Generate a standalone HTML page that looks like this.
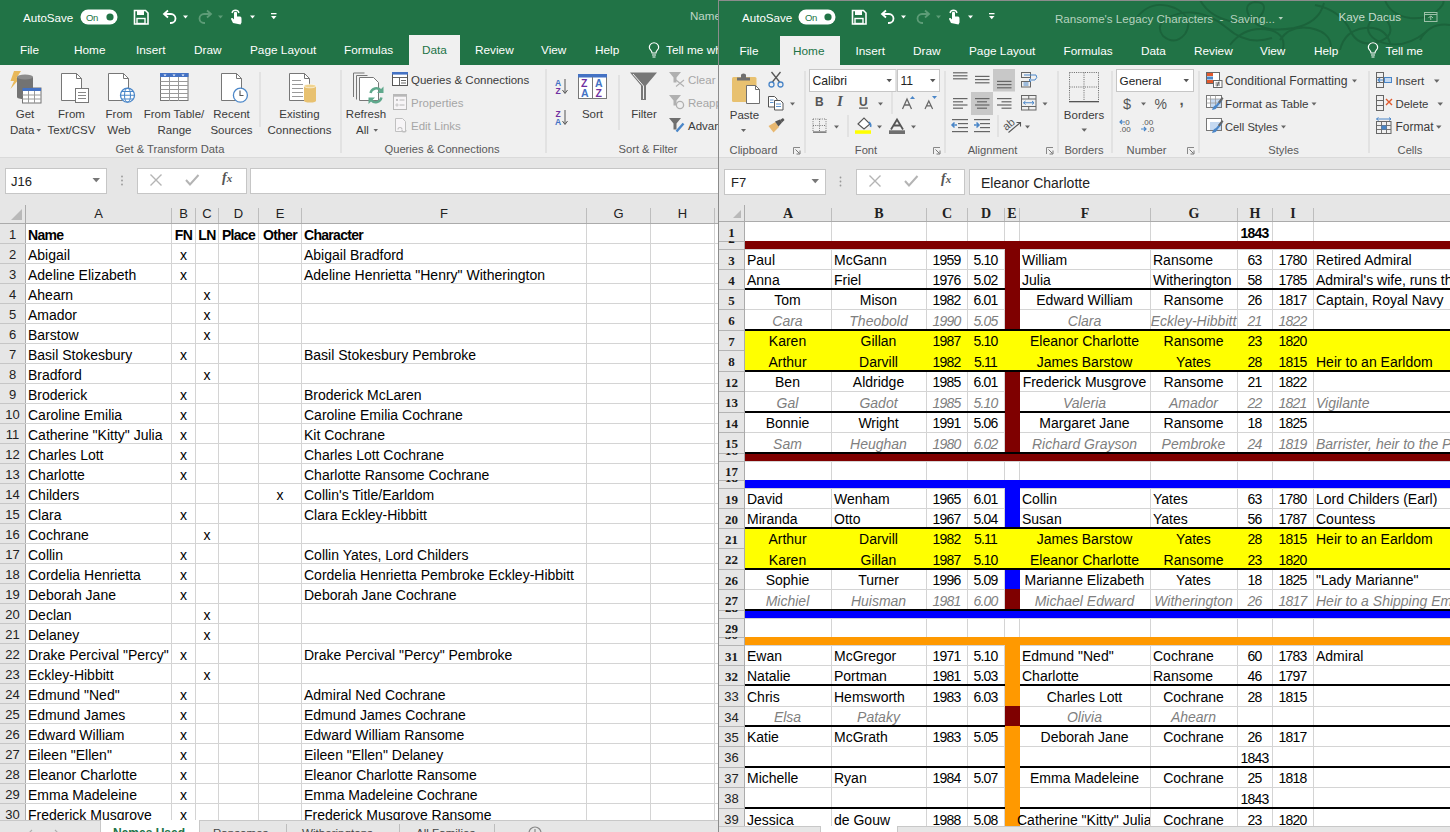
<!DOCTYPE html>
<html><head><meta charset="utf-8"><style>
*{box-sizing:border-box}
body{margin:0;width:1450px;height:832px;overflow:hidden;position:relative;font-family:"Liberation Sans",sans-serif;background:#fff}
.win{position:absolute;top:0;height:832px;overflow:hidden}
.hdr{position:absolute;background:#e6e6e6}
.ch{position:absolute;height:18px;line-height:17px;text-align:center;font-size:13px;color:#222}
.chs{position:absolute;height:16px;line-height:18px;text-align:center;font-family:"Liberation Serif",serif;font-weight:bold;font-size:14px;color:#222}
.rn{position:absolute;left:0;width:25px;height:19px;line-height:20px;text-align:center;font-size:13px;color:#222}
.rns{position:absolute;left:0;width:25px;text-align:center;font-family:"Liberation Serif",serif;font-weight:bold;font-size:13px;color:#1a1a1a}
.c{position:absolute;white-space:nowrap;font-size:14px;line-height:20px;height:19px;color:#000}
.cc{text-align:center;display:flex;justify-content:center}
.ab{position:absolute}
.t{position:absolute;white-space:nowrap;font-size:12px;color:#fff}
.rl{position:absolute;white-space:nowrap;font-size:12px;color:#444}
.gl{position:absolute;white-space:nowrap;font-size:11.5px;color:#595959}
</style></head>
<body>
<div class="win" id="L" style="left:0;width:718px">
<div class="ab" style="left:0;top:0;width:718px;height:65px;background:#217346"></div>
<div class="ab" style="left:0;top:65px;width:718px;height:93px;background:#f0f0f0"></div>
<div class="ab" style="left:0;top:157px;width:718px;height:1px;background:#dadada"></div>
<div class="ab" style="left:0;top:158px;width:718px;height:47px;background:#e6e6e6"></div>
<div class="ab" style="left:23px;top:11.2px;font-size:11.6px;line-height:14px;color:#fff;white-space:nowrap;">AutoSave</div>
<div class="ab" style="left:690px;top:9.0px;font-size:11.6px;line-height:14px;color:#bfd6c6;white-space:nowrap;">Names Used</div>
<div class="ab" style="left:20px;top:43.1px;font-size:11.8px;line-height:14px;color:#fff;white-space:nowrap;">File</div>
<div class="ab" style="left:74px;top:43.1px;font-size:11.8px;line-height:14px;color:#fff;white-space:nowrap;">Home</div>
<div class="ab" style="left:136px;top:43.1px;font-size:11.8px;line-height:14px;color:#fff;white-space:nowrap;">Insert</div>
<div class="ab" style="left:194px;top:43.1px;font-size:11.8px;line-height:14px;color:#fff;white-space:nowrap;">Draw</div>
<div class="ab" style="left:250px;top:43.1px;font-size:11.8px;line-height:14px;color:#fff;white-space:nowrap;">Page Layout</div>
<div class="ab" style="left:344px;top:43.1px;font-size:11.8px;line-height:14px;color:#fff;white-space:nowrap;">Formulas</div>
<div class="ab" style="left:475px;top:43.1px;font-size:11.8px;line-height:14px;color:#fff;white-space:nowrap;">Review</div>
<div class="ab" style="left:541px;top:43.1px;font-size:11.8px;line-height:14px;color:#fff;white-space:nowrap;">View</div>
<div class="ab" style="left:595px;top:43.1px;font-size:11.8px;line-height:14px;color:#fff;white-space:nowrap;">Help</div>
<div class="ab" style="left:666px;top:43.1px;font-size:11.8px;line-height:14px;color:#fff;white-space:nowrap;">Tell me what you want to do</div>
<div class="ab" style="left:409px;top:35px;width:51px;height:30px;background:#f0f0f0"></div>
<div class="ab" style="left:422px;top:43.1px;font-size:11.8px;line-height:14px;color:#217346;white-space:nowrap;">Data</div>
<svg class="ab" style="left:0;top:0" width="718" height="160"><rect x="80.5" y="9.5" width="37" height="15" rx="7.5" fill="#fff"/><circle cx="110" cy="17" r="3.6" fill="#217346"/><path d="M134.5 10.5 h11 l2.5 2.5 v11 h-13.5 z" fill="none" stroke="#fff" stroke-width="1.6"/><rect x="137" y="11" width="7" height="4" fill="#fff"/><rect x="137" y="18.5" width="8" height="5" fill="none" stroke="#fff" stroke-width="1.4"/><path d="M165 14 h6 a4.5 4.5 0 0 1 0 9 h-1" fill="none" stroke="#fff" stroke-width="1.8"/><path d="M168 10.5 l-4 3.5 l4 3.5" fill="none" stroke="#fff" stroke-width="1.8"/><polygon points="183,15.5 188,15.5 185.5,18.5" fill="#fff"/><path d="M210 14 h-6 a4.5 4.5 0 0 0 0 9 h1" fill="none" stroke="#5d9c77" stroke-width="1.8"/><path d="M207 10.5 l4 3.5 l-4 3.5" fill="none" stroke="#5d9c77" stroke-width="1.8"/><polygon points="218,15.5 223,15.5 220.5,18.5" fill="#5d9c77"/><path d="M233 23 l-2 -4 q0 -1.5 1.5 -1 l1.5 1.5 v-7 q1.5 -1.5 3 0 v4 h3 q1.5 0 1.5 2 v4 l-1 2 z" fill="#fff"/><path d="M232 13 a3.6 3.6 0 0 1 7 0" fill="none" stroke="#fff" stroke-width="1.3"/><polygon points="250,15.5 255,15.5 252.5,18.5" fill="#fff"/><rect x="271" y="13" width="5.5" height="1.3" fill="#fff"/><polygon points="271,16 276.5,16 273.75,19.25" fill="#fff"/><path d="M652 53 q0 -1.5 -1.3 -2.8 q-2.2 -2.2 -0.9 -5 q1.3 -2.4 4.2 -2.4 q2.9 0 4.2 2.4 q1.3 2.8 -0.9 5 q-1.3 1.3 -1.3 2.8 z" fill="none" stroke="#fff" stroke-width="1.1"/><path d="M652 55 h4 M652.5 57 h3" stroke="#fff" stroke-width="1.1"/><rect x="259.5" y="72" width="1" height="55" fill="#d4d4d4"/><rect x="340.5" y="70" width="1" height="83" fill="#d4d4d4"/><rect x="545.5" y="69" width="1" height="84" fill="#d4d4d4"/><rect x="618.5" y="75" width="1" height="55" fill="#d4d4d4"/><path d="M14 71 h7 l-4.5 7 h3.5 l-9.5 11 l3.5 -8 h-3.5 z" fill="#e8b85a"/><path d="M17 77 v20 q0 2 8 2 q8 0 8 -2 v-20 z" fill="#737373"/><ellipse cx="25" cy="77" rx="8" ry="2.5" fill="#8c8c8c"/><rect x="22.5" y="88" width="18.5" height="15" fill="#fff" stroke="#737373" stroke-width="1"/><rect x="22.5" y="88" width="18.5" height="3" fill="#4472c4"/><path d="M22.5 95 h18.5 M22.5 99 h18.5 M28.5 91 v12 M34.5 91 v12" stroke="#9a9a9a" stroke-width="1"/><polygon points="36.5,129 41.0,129 38.75,131.75" fill="#666"/><path d="M61.5 73.5 h15 l5 5 v22 h-20 z" fill="#fff" stroke="#777" stroke-width="1"/><path d="M76.5 73.5 v5 h5" fill="none" stroke="#777"/><rect x="75.5" y="88.5" width="13" height="14" fill="#fff" stroke="#777"/><path d="M78 92.5 h8 M78 95.5 h8 M78 98.5 h8" stroke="#888" stroke-width="1"/><path d="M108.5 73.5 h15 l5 5 v22 h-20 z" fill="#fff" stroke="#777" stroke-width="1"/><path d="M123.5 73.5 v5 h5" fill="none" stroke="#777"/><circle cx="127.5" cy="95.2" r="7" fill="#fff" stroke="#4a86c8" stroke-width="1.3"/><ellipse cx="127.5" cy="95.2" rx="3" ry="7" fill="none" stroke="#4a86c8" stroke-width="1.1"/><path d="M120.5 95.2 h14 M121.5 91.5 h12 M121.5 99 h12" stroke="#4a86c8" stroke-width="1.1"/><rect x="160.5" y="73.5" width="27.5" height="27" fill="#fff" stroke="#777"/><rect x="160" y="73" width="28.5" height="4" fill="#4472c4"/><path d="M160.5 81.5 h27.5 M160.5 85.5 h27.5 M160.5 89.5 h27.5 M160.5 93.5 h27.5 M160.5 97.5 h27.5 M169.5 77 v24 M178.5 77 v24" stroke="#9a9a9a" stroke-width="1"/><path d="M163.5 74.5 h3 l-1.5 1.7z M172.5 74.5 h3 l-1.5 1.7z M181.5 74.5 h3 l-1.5 1.7z" fill="#fff"/><path d="M221.5 73.5 h15 l5 5 v22 h-20 z" fill="#fff" stroke="#777" stroke-width="1"/><path d="M236.5 73.5 v5 h5" fill="none" stroke="#777"/><circle cx="240.4" cy="95.2" r="7" fill="#fff" stroke="#4a86c8" stroke-width="1.3"/><path d="M240 90.5 v5 h3.5" fill="none" stroke="#555" stroke-width="1.1"/><path d="M289.5 73.5 h15 l5 5 v22 h-20 z" fill="#fff" stroke="#777" stroke-width="1"/><path d="M304.5 73.5 v5 h5" fill="none" stroke="#777"/><path d="M292 80.5 h9 M292 84.5 h11 M292 88.5 h11 M292 92.5 h11 M292 96.5 h11" stroke="#999" stroke-width="1"/><path d="M304 86 v14.5 q0 2 6 2 q6 0 6 -2 v-14.5 z" fill="#e8c170"/><ellipse cx="310" cy="86" rx="6" ry="1.8" fill="#f0d38f" stroke="#fff" stroke-width="0.6"/><path d="M353.5 73 v24 M353.5 73 h11" stroke="#777" fill="none"/><path d="M356.5 75.5 v24 M356.5 75.5 h11" stroke="#777" fill="none"/><path d="M359.5 77.5 h14 l5 5 v18 h-19 z" fill="#fff" stroke="#777"/><path d="M370.5 93 a6 6 0 0 1 10.5 -2.5" fill="none" stroke="#5fa88c" stroke-width="2.4"/><path d="M381.5 97.5 a6 6 0 0 1 -10.5 2.5" fill="none" stroke="#5fa88c" stroke-width="2.4"/><path d="M383.5 86.5 v6.5 h-6.5 z M368.5 104 v-6.5 h6.5 z" fill="#5fa88c"/><polygon points="373.5,129 378.0,129 375.75,131.75" fill="#666"/><rect x="392.5" y="72.5" width="15" height="13" fill="#fff" stroke="#555"/><rect x="392" y="72" width="16" height="2.6" fill="#4472c4"/><path d="M392.5 77.5 h15 M399.5 77.5 v8 M401 80.5 h5 M401 83 h5" stroke="#555" stroke-width="0.9"/><rect x="393.5" y="94.5" width="13" height="15" fill="#f7f5f7" stroke="#b8b8b8"/><rect x="393.5" y="94.5" width="13" height="2.2" fill="#b8b8b8"/><circle cx="397" cy="100" r="1.1" fill="#b8b8b8"/><circle cx="397" cy="105" r="1.1" fill="none" stroke="#b8b8b8" stroke-width="0.8"/><path d="M399.5 100 h5 M399.5 105 h5" stroke="#b8b8b8"/><path d="M395.5 118.5 h7 l3 3 v10 h-10 z" fill="#f7f5f7" stroke="#c0c0c0"/><path d="M398 129.5 a2 2 0 0 1 4 0 M402 130 a2 2 0 0 0 4 0" stroke="#c0c0c0" fill="none" stroke-width="1.2"/><text x="555" y="85.8" font-family="Liberation Sans" font-size="8.5" font-weight="bold" fill="#4472c4">A</text><text x="555.5" y="94" font-family="Liberation Sans" font-size="8.5" font-weight="bold" fill="#7030a0">Z</text><path d="M565 79 v14 M562.5 90 l2.5 3.5 l2.5 -3.5" stroke="#555" fill="none" stroke-width="1"/><text x="555.5" y="117" font-family="Liberation Sans" font-size="8.5" font-weight="bold" fill="#7030a0">Z</text><text x="555" y="125.3" font-family="Liberation Sans" font-size="8.5" font-weight="bold" fill="#4472c4">A</text><path d="M565 110 v14 M562.5 121 l2.5 3.5 l2.5 -3.5" stroke="#555" fill="none" stroke-width="1"/><rect x="578.5" y="74.5" width="28" height="24" fill="#fff" stroke="#777"/><rect x="578" y="74" width="29" height="3.5" fill="#4472c4"/><path d="M592.5 77 v21" stroke="#777"/><g font-family="Liberation Sans" font-size="10.5" font-weight="bold"><text x="581" y="86.5" fill="#7030a0">Z</text><text x="581" y="97" fill="#4472c4">A</text><text x="595" y="86.5" fill="#4472c4">A</text><text x="595.5" y="97" fill="#7030a0">Z</text></g><path d="M630 72.5 h27 l-11 13 v14.5 h-5 v-14.5 z" fill="#777"/><path d="M633 74 l10.5 12 v13" stroke="#fff" stroke-width="0.9" fill="none"/><path d="M669 72 h12 l-4.5 5.5 v5 h-3 v-5 z" fill="#b0b0b0"/><path d="M676 80 l8 6.5 M684 80 l-8 6.5" stroke="#b0b0b0" stroke-width="1.1"/><path d="M669 95 h12 l-4.5 5.5 v5 h-3 v-5 z" fill="#b0b0b0"/><circle cx="680" cy="105" r="3.6" fill="none" stroke="#b0b0b0" stroke-width="1.3"/><path d="M669 118 h12 l-4.5 5.5 v6 h-3 v-6 z" fill="#6f6f6f"/><path d="M676.5 131.5 l7 -8" stroke="#4a86c8" stroke-width="2.4"/></svg>
<div class="ab" style="left:-35.0px;width:120px;text-align:center;top:106.9px;font-size:11.5px;line-height:14px;color:#3b3b3b;white-space:nowrap">Get</div>
<div class="ab" style="left:10px;top:122.8px;font-size:11.5px;line-height:14px;color:#3b3b3b;white-space:nowrap;">Data</div>
<div class="ab" style="left:11.5px;width:120px;text-align:center;top:106.9px;font-size:11.5px;line-height:14px;color:#3b3b3b;white-space:nowrap">From</div>
<div class="ab" style="left:11.5px;width:120px;text-align:center;top:122.8px;font-size:11.5px;line-height:14px;color:#3b3b3b;white-space:nowrap">Text/CSV</div>
<div class="ab" style="left:59.0px;width:120px;text-align:center;top:106.9px;font-size:11.5px;line-height:14px;color:#3b3b3b;white-space:nowrap">From</div>
<div class="ab" style="left:59.0px;width:120px;text-align:center;top:122.8px;font-size:11.5px;line-height:14px;color:#3b3b3b;white-space:nowrap">Web</div>
<div class="ab" style="left:114.0px;width:120px;text-align:center;top:106.9px;font-size:11.5px;line-height:14px;color:#3b3b3b;white-space:nowrap">From Table/</div>
<div class="ab" style="left:114.5px;width:120px;text-align:center;top:122.8px;font-size:11.5px;line-height:14px;color:#3b3b3b;white-space:nowrap">Range</div>
<div class="ab" style="left:171.5px;width:120px;text-align:center;top:106.9px;font-size:11.5px;line-height:14px;color:#3b3b3b;white-space:nowrap">Recent</div>
<div class="ab" style="left:171.5px;width:120px;text-align:center;top:122.8px;font-size:11.5px;line-height:14px;color:#3b3b3b;white-space:nowrap">Sources</div>
<div class="ab" style="left:239.5px;width:120px;text-align:center;top:106.9px;font-size:11.5px;line-height:14px;color:#3b3b3b;white-space:nowrap">Existing</div>
<div class="ab" style="left:239.5px;width:120px;text-align:center;top:122.8px;font-size:11.5px;line-height:14px;color:#3b3b3b;white-space:nowrap">Connections</div>
<div class="ab" style="left:306.0px;width:120px;text-align:center;top:106.9px;font-size:11.5px;line-height:14px;color:#3b3b3b;white-space:nowrap">Refresh</div>
<div class="ab" style="left:356px;top:122.8px;font-size:11.5px;line-height:14px;color:#3b3b3b;white-space:nowrap;">All</div>
<div class="ab" style="left:411px;top:73.2px;font-size:11.5px;line-height:14px;color:#3b3b3b;white-space:nowrap;">Queries &amp; Connections</div>
<div class="ab" style="left:411px;top:95.8px;font-size:11.5px;line-height:14px;color:#a6a6a6;white-space:nowrap;">Properties</div>
<div class="ab" style="left:411px;top:118.8px;font-size:11.5px;line-height:14px;color:#a6a6a6;white-space:nowrap;">Edit Links</div>
<div class="ab" style="left:532.5px;width:120px;text-align:center;top:106.9px;font-size:11.5px;line-height:14px;color:#3b3b3b;white-space:nowrap">Sort</div>
<div class="ab" style="left:584.0px;width:120px;text-align:center;top:106.9px;font-size:11.5px;line-height:14px;color:#3b3b3b;white-space:nowrap">Filter</div>
<div class="ab" style="left:688px;top:72.8px;font-size:11.5px;line-height:14px;color:#a6a6a6;white-space:nowrap;">Clear</div>
<div class="ab" style="left:688px;top:95.7px;font-size:11.5px;line-height:14px;color:#a6a6a6;white-space:nowrap;">Reapply</div>
<div class="ab" style="left:688px;top:118.7px;font-size:11.5px;line-height:14px;color:#3b3b3b;white-space:nowrap;">Advanced</div>
<div class="ab" style="left:90.0px;width:160px;text-align:center;top:142.0px;font-size:11.2px;line-height:14px;color:#595959;white-space:nowrap">Get &amp; Transform Data</div>
<div class="ab" style="left:362.0px;width:160px;text-align:center;top:142.0px;font-size:11.2px;line-height:14px;color:#595959;white-space:nowrap">Queries &amp; Connections</div>
<div class="ab" style="left:588.0px;width:120px;text-align:center;top:142.0px;font-size:11.2px;line-height:14px;color:#595959;white-space:nowrap">Sort &amp; Filter</div>
<div class="ab" style="left:86px;top:11.4px;font-size:9.5px;line-height:14px;color:#217346;white-space:nowrap;letter-spacing:-0.3px">On</div>
<div class="ab" style="left:5px;top:168px;width:102px;height:26px;background:#fff;border:1px solid #c6c6c6"></div>
<div class="ab" style="left:11px;top:174.7px;font-size:13px;line-height:14px;color:#222;white-space:nowrap;">J16</div>
<div class="ab" style="left:137px;top:168px;width:110px;height:26px;background:#fff;border:1px solid #c6c6c6"></div>
<div class="ab" style="left:250px;top:168px;width:480px;height:26px;background:#fff;border:1px solid #c6c6c6"></div>
<div class="ab" style="left:222px;top:170px;font-family:'Liberation Serif';font-style:italic;font-weight:bold;font-size:14px;color:#555">f<span style="font-size:11px">x</span></div>
<svg class="ab" style="left:0;top:160px" width="718" height="45"><g transform="translate(0,-160)"><polygon points="92.5,178 100.0,178 96.25,182.25" fill="#777"/><circle cx="122" cy="176.5" r="0.9" fill="#999"/><circle cx="122" cy="180.5" r="0.9" fill="#999"/><circle cx="122" cy="184.5" r="0.9" fill="#999"/><path d="M150.5 174.5 l11 11 M161.5 174.5 l-11 11" stroke="#b4b4b4" stroke-width="1.4"/><path d="M186 180 l4 4.5 l8.5 -9.5" stroke="#b4b4b4" stroke-width="2" fill="none"/></g></svg>
<div style="position:absolute;left:0;top:205px;width:718px;height:627px;background:#fff"></div>
<div class="hdr" style="left:0;top:205px;width:718px;height:18px"></div>
<div class="hdr" style="left:0;top:223px;width:25px;height:609px"></div>
<svg style="position:absolute;left:0;top:205px" width="25" height="18"><polygon points="22,4 22,15 11,15" fill="#b9b9b9"/></svg>
<div style="position:absolute;left:171px;top:223px;width:1px;height:609px;background:#d4d4d4"></div>
<div style="position:absolute;left:171px;top:208px;width:1px;height:15px;background:#bdbdbd"></div>
<div class="ch" style="left:26px;top:205px;width:145px">A</div>
<div style="position:absolute;left:195px;top:223px;width:1px;height:609px;background:#d4d4d4"></div>
<div style="position:absolute;left:195px;top:208px;width:1px;height:15px;background:#bdbdbd"></div>
<div class="ch" style="left:172px;top:205px;width:23px">B</div>
<div style="position:absolute;left:218px;top:223px;width:1px;height:609px;background:#d4d4d4"></div>
<div style="position:absolute;left:218px;top:208px;width:1px;height:15px;background:#bdbdbd"></div>
<div class="ch" style="left:196px;top:205px;width:22px">C</div>
<div style="position:absolute;left:258px;top:223px;width:1px;height:609px;background:#d4d4d4"></div>
<div style="position:absolute;left:258px;top:208px;width:1px;height:15px;background:#bdbdbd"></div>
<div class="ch" style="left:219px;top:205px;width:39px">D</div>
<div style="position:absolute;left:301px;top:223px;width:1px;height:609px;background:#d4d4d4"></div>
<div style="position:absolute;left:301px;top:208px;width:1px;height:15px;background:#bdbdbd"></div>
<div class="ch" style="left:259px;top:205px;width:42px">E</div>
<div style="position:absolute;left:586px;top:223px;width:1px;height:609px;background:#d4d4d4"></div>
<div style="position:absolute;left:586px;top:208px;width:1px;height:15px;background:#bdbdbd"></div>
<div class="ch" style="left:302px;top:205px;width:284px">F</div>
<div style="position:absolute;left:650px;top:223px;width:1px;height:609px;background:#d4d4d4"></div>
<div style="position:absolute;left:650px;top:208px;width:1px;height:15px;background:#bdbdbd"></div>
<div class="ch" style="left:587px;top:205px;width:63px">G</div>
<div style="position:absolute;left:714px;top:223px;width:1px;height:609px;background:#d4d4d4"></div>
<div style="position:absolute;left:714px;top:208px;width:1px;height:15px;background:#bdbdbd"></div>
<div class="ch" style="left:651px;top:205px;width:63px">H</div>
<div style="position:absolute;left:800px;top:223px;width:1px;height:609px;background:#d4d4d4"></div>
<div style="position:absolute;left:800px;top:208px;width:1px;height:15px;background:#bdbdbd"></div>
<div style="position:absolute;left:0;top:223px;width:718px;height:1px;background:#ababab"></div>
<div style="position:absolute;left:25px;top:205px;width:1px;height:627px;background:#ababab"></div>
<div style="position:absolute;left:0;top:243px;width:718px;height:1px;background:#d4d4d4"></div>
<div style="position:absolute;left:0;top:243px;width:25px;height:1px;background:#c6c6c6"></div>
<div class="rn" style="top:225px">1</div>
<div class="c" style="left:28px;top:225px; font-weight:bold;letter-spacing:-0.7px;">Name</div>
<div class="c cc" style="left:172px;width:23px;top:225px; font-weight:bold;letter-spacing:-0.7px;">FN</div>
<div class="c cc" style="left:196px;width:22px;top:225px; font-weight:bold;letter-spacing:-0.7px;">LN</div>
<div class="c cc" style="left:219px;width:39px;top:225px; font-weight:bold;letter-spacing:-0.7px;">Place</div>
<div class="c cc" style="left:259px;width:42px;top:225px; font-weight:bold;letter-spacing:-0.7px;">Other</div>
<div class="c" style="left:304px;top:225px; font-weight:bold;letter-spacing:-0.7px;">Character</div>
<div style="position:absolute;left:0;top:263px;width:718px;height:1px;background:#d4d4d4"></div>
<div style="position:absolute;left:0;top:263px;width:25px;height:1px;background:#c6c6c6"></div>
<div class="rn" style="top:245px">2</div>
<div class="c" style="left:28px;top:245px;">Abigail</div>
<div class="c cc" style="left:172px;width:23px;top:245px">x</div>
<div class="c" style="left:304px;top:245px;">Abigail Bradford</div>
<div style="position:absolute;left:0;top:283px;width:718px;height:1px;background:#d4d4d4"></div>
<div style="position:absolute;left:0;top:283px;width:25px;height:1px;background:#c6c6c6"></div>
<div class="rn" style="top:265px">3</div>
<div class="c" style="left:28px;top:265px;">Adeline Elizabeth</div>
<div class="c cc" style="left:172px;width:23px;top:265px">x</div>
<div class="c" style="left:304px;top:265px;">Adeline Henrietta "Henry" Witherington</div>
<div style="position:absolute;left:0;top:303px;width:718px;height:1px;background:#d4d4d4"></div>
<div style="position:absolute;left:0;top:303px;width:25px;height:1px;background:#c6c6c6"></div>
<div class="rn" style="top:285px">4</div>
<div class="c" style="left:28px;top:285px;">Ahearn</div>
<div class="c cc" style="left:196px;width:22px;top:285px">x</div>
<div style="position:absolute;left:0;top:323px;width:718px;height:1px;background:#d4d4d4"></div>
<div style="position:absolute;left:0;top:323px;width:25px;height:1px;background:#c6c6c6"></div>
<div class="rn" style="top:305px">5</div>
<div class="c" style="left:28px;top:305px;">Amador</div>
<div class="c cc" style="left:196px;width:22px;top:305px">x</div>
<div style="position:absolute;left:0;top:343px;width:718px;height:1px;background:#d4d4d4"></div>
<div style="position:absolute;left:0;top:343px;width:25px;height:1px;background:#c6c6c6"></div>
<div class="rn" style="top:325px">6</div>
<div class="c" style="left:28px;top:325px;">Barstow</div>
<div class="c cc" style="left:196px;width:22px;top:325px">x</div>
<div style="position:absolute;left:0;top:363px;width:718px;height:1px;background:#d4d4d4"></div>
<div style="position:absolute;left:0;top:363px;width:25px;height:1px;background:#c6c6c6"></div>
<div class="rn" style="top:345px">7</div>
<div class="c" style="left:28px;top:345px;">Basil Stokesbury</div>
<div class="c cc" style="left:172px;width:23px;top:345px">x</div>
<div class="c" style="left:304px;top:345px;">Basil Stokesbury Pembroke</div>
<div style="position:absolute;left:0;top:383px;width:718px;height:1px;background:#d4d4d4"></div>
<div style="position:absolute;left:0;top:383px;width:25px;height:1px;background:#c6c6c6"></div>
<div class="rn" style="top:365px">8</div>
<div class="c" style="left:28px;top:365px;">Bradford</div>
<div class="c cc" style="left:196px;width:22px;top:365px">x</div>
<div style="position:absolute;left:0;top:403px;width:718px;height:1px;background:#d4d4d4"></div>
<div style="position:absolute;left:0;top:403px;width:25px;height:1px;background:#c6c6c6"></div>
<div class="rn" style="top:385px">9</div>
<div class="c" style="left:28px;top:385px;">Broderick</div>
<div class="c cc" style="left:172px;width:23px;top:385px">x</div>
<div class="c" style="left:304px;top:385px;">Broderick McLaren</div>
<div style="position:absolute;left:0;top:423px;width:718px;height:1px;background:#d4d4d4"></div>
<div style="position:absolute;left:0;top:423px;width:25px;height:1px;background:#c6c6c6"></div>
<div class="rn" style="top:405px">10</div>
<div class="c" style="left:28px;top:405px;">Caroline Emilia</div>
<div class="c cc" style="left:172px;width:23px;top:405px">x</div>
<div class="c" style="left:304px;top:405px;">Caroline Emilia Cochrane</div>
<div style="position:absolute;left:0;top:443px;width:718px;height:1px;background:#d4d4d4"></div>
<div style="position:absolute;left:0;top:443px;width:25px;height:1px;background:#c6c6c6"></div>
<div class="rn" style="top:425px">11</div>
<div class="c" style="left:28px;top:425px;">Catherine "Kitty" Julia</div>
<div class="c cc" style="left:172px;width:23px;top:425px">x</div>
<div class="c" style="left:304px;top:425px;">Kit Cochrane</div>
<div style="position:absolute;left:0;top:463px;width:718px;height:1px;background:#d4d4d4"></div>
<div style="position:absolute;left:0;top:463px;width:25px;height:1px;background:#c6c6c6"></div>
<div class="rn" style="top:445px">12</div>
<div class="c" style="left:28px;top:445px;">Charles Lott</div>
<div class="c cc" style="left:172px;width:23px;top:445px">x</div>
<div class="c" style="left:304px;top:445px;">Charles Lott Cochrane</div>
<div style="position:absolute;left:0;top:483px;width:718px;height:1px;background:#d4d4d4"></div>
<div style="position:absolute;left:0;top:483px;width:25px;height:1px;background:#c6c6c6"></div>
<div class="rn" style="top:465px">13</div>
<div class="c" style="left:28px;top:465px;">Charlotte</div>
<div class="c cc" style="left:172px;width:23px;top:465px">x</div>
<div class="c" style="left:304px;top:465px;">Charlotte Ransome Cochrane</div>
<div style="position:absolute;left:0;top:503px;width:718px;height:1px;background:#d4d4d4"></div>
<div style="position:absolute;left:0;top:503px;width:25px;height:1px;background:#c6c6c6"></div>
<div class="rn" style="top:485px">14</div>
<div class="c" style="left:28px;top:485px;">Childers</div>
<div class="c cc" style="left:259px;width:42px;top:485px">x</div>
<div class="c" style="left:304px;top:485px;">Collin's Title/Earldom</div>
<div style="position:absolute;left:0;top:523px;width:718px;height:1px;background:#d4d4d4"></div>
<div style="position:absolute;left:0;top:523px;width:25px;height:1px;background:#c6c6c6"></div>
<div class="rn" style="top:505px">15</div>
<div class="c" style="left:28px;top:505px;">Clara</div>
<div class="c cc" style="left:172px;width:23px;top:505px">x</div>
<div class="c" style="left:304px;top:505px;">Clara Eckley-Hibbitt</div>
<div style="position:absolute;left:0;top:543px;width:718px;height:1px;background:#d4d4d4"></div>
<div style="position:absolute;left:0;top:543px;width:25px;height:1px;background:#c6c6c6"></div>
<div class="rn" style="top:525px">16</div>
<div class="c" style="left:28px;top:525px;">Cochrane</div>
<div class="c cc" style="left:196px;width:22px;top:525px">x</div>
<div style="position:absolute;left:0;top:563px;width:718px;height:1px;background:#d4d4d4"></div>
<div style="position:absolute;left:0;top:563px;width:25px;height:1px;background:#c6c6c6"></div>
<div class="rn" style="top:545px">17</div>
<div class="c" style="left:28px;top:545px;">Collin</div>
<div class="c cc" style="left:172px;width:23px;top:545px">x</div>
<div class="c" style="left:304px;top:545px;">Collin Yates, Lord Childers</div>
<div style="position:absolute;left:0;top:583px;width:718px;height:1px;background:#d4d4d4"></div>
<div style="position:absolute;left:0;top:583px;width:25px;height:1px;background:#c6c6c6"></div>
<div class="rn" style="top:565px">18</div>
<div class="c" style="left:28px;top:565px;">Cordelia Henrietta</div>
<div class="c cc" style="left:172px;width:23px;top:565px">x</div>
<div class="c" style="left:304px;top:565px;">Cordelia Henrietta Pembroke Eckley-Hibbitt</div>
<div style="position:absolute;left:0;top:603px;width:718px;height:1px;background:#d4d4d4"></div>
<div style="position:absolute;left:0;top:603px;width:25px;height:1px;background:#c6c6c6"></div>
<div class="rn" style="top:585px">19</div>
<div class="c" style="left:28px;top:585px;">Deborah Jane</div>
<div class="c cc" style="left:172px;width:23px;top:585px">x</div>
<div class="c" style="left:304px;top:585px;">Deborah Jane Cochrane</div>
<div style="position:absolute;left:0;top:623px;width:718px;height:1px;background:#d4d4d4"></div>
<div style="position:absolute;left:0;top:623px;width:25px;height:1px;background:#c6c6c6"></div>
<div class="rn" style="top:605px">20</div>
<div class="c" style="left:28px;top:605px;">Declan</div>
<div class="c cc" style="left:196px;width:22px;top:605px">x</div>
<div style="position:absolute;left:0;top:643px;width:718px;height:1px;background:#d4d4d4"></div>
<div style="position:absolute;left:0;top:643px;width:25px;height:1px;background:#c6c6c6"></div>
<div class="rn" style="top:625px">21</div>
<div class="c" style="left:28px;top:625px;">Delaney</div>
<div class="c cc" style="left:196px;width:22px;top:625px">x</div>
<div style="position:absolute;left:0;top:663px;width:718px;height:1px;background:#d4d4d4"></div>
<div style="position:absolute;left:0;top:663px;width:25px;height:1px;background:#c6c6c6"></div>
<div class="rn" style="top:645px">22</div>
<div class="c" style="left:28px;top:645px;">Drake Percival "Percy"</div>
<div class="c cc" style="left:172px;width:23px;top:645px">x</div>
<div class="c" style="left:304px;top:645px;">Drake Percival "Percy" Pembroke</div>
<div style="position:absolute;left:0;top:683px;width:718px;height:1px;background:#d4d4d4"></div>
<div style="position:absolute;left:0;top:683px;width:25px;height:1px;background:#c6c6c6"></div>
<div class="rn" style="top:665px">23</div>
<div class="c" style="left:28px;top:665px;">Eckley-Hibbitt</div>
<div class="c cc" style="left:196px;width:22px;top:665px">x</div>
<div style="position:absolute;left:0;top:703px;width:718px;height:1px;background:#d4d4d4"></div>
<div style="position:absolute;left:0;top:703px;width:25px;height:1px;background:#c6c6c6"></div>
<div class="rn" style="top:685px">24</div>
<div class="c" style="left:28px;top:685px;">Edmund "Ned"</div>
<div class="c cc" style="left:172px;width:23px;top:685px">x</div>
<div class="c" style="left:304px;top:685px;">Admiral Ned Cochrane</div>
<div style="position:absolute;left:0;top:723px;width:718px;height:1px;background:#d4d4d4"></div>
<div style="position:absolute;left:0;top:723px;width:25px;height:1px;background:#c6c6c6"></div>
<div class="rn" style="top:705px">25</div>
<div class="c" style="left:28px;top:705px;">Edmund James</div>
<div class="c cc" style="left:172px;width:23px;top:705px">x</div>
<div class="c" style="left:304px;top:705px;">Edmund James Cochrane</div>
<div style="position:absolute;left:0;top:743px;width:718px;height:1px;background:#d4d4d4"></div>
<div style="position:absolute;left:0;top:743px;width:25px;height:1px;background:#c6c6c6"></div>
<div class="rn" style="top:725px">26</div>
<div class="c" style="left:28px;top:725px;">Edward William</div>
<div class="c cc" style="left:172px;width:23px;top:725px">x</div>
<div class="c" style="left:304px;top:725px;">Edward William Ransome</div>
<div style="position:absolute;left:0;top:763px;width:718px;height:1px;background:#d4d4d4"></div>
<div style="position:absolute;left:0;top:763px;width:25px;height:1px;background:#c6c6c6"></div>
<div class="rn" style="top:745px">27</div>
<div class="c" style="left:28px;top:745px;">Eileen "Ellen"</div>
<div class="c cc" style="left:172px;width:23px;top:745px">x</div>
<div class="c" style="left:304px;top:745px;">Eileen "Ellen" Delaney</div>
<div style="position:absolute;left:0;top:783px;width:718px;height:1px;background:#d4d4d4"></div>
<div style="position:absolute;left:0;top:783px;width:25px;height:1px;background:#c6c6c6"></div>
<div class="rn" style="top:765px">28</div>
<div class="c" style="left:28px;top:765px;">Eleanor Charlotte</div>
<div class="c cc" style="left:172px;width:23px;top:765px">x</div>
<div class="c" style="left:304px;top:765px;">Eleanor Charlotte Ransome</div>
<div style="position:absolute;left:0;top:803px;width:718px;height:1px;background:#d4d4d4"></div>
<div style="position:absolute;left:0;top:803px;width:25px;height:1px;background:#c6c6c6"></div>
<div class="rn" style="top:785px">29</div>
<div class="c" style="left:28px;top:785px;">Emma Madeleine</div>
<div class="c cc" style="left:172px;width:23px;top:785px">x</div>
<div class="c" style="left:304px;top:785px;">Emma Madeleine Cochrane</div>
<div style="position:absolute;left:0;top:823px;width:718px;height:1px;background:#d4d4d4"></div>
<div style="position:absolute;left:0;top:823px;width:25px;height:1px;background:#c6c6c6"></div>
<div class="rn" style="top:805px">30</div>
<div class="c" style="left:28px;top:805px;">Frederick Musgrove</div>
<div class="c cc" style="left:172px;width:23px;top:805px">x</div>
<div class="c" style="left:304px;top:805px;">Frederick Musgrove Ransome</div>
<div class="ab" style="left:0;top:820px;width:718px;height:12px;background:#e6e6e6;border-top:1px solid #c8c8c8"></div>
<div class="ab" style="left:100px;top:820px;width:100px;height:12px;background:#fff;border-left:1px solid #c8c8c8;border-right:1px solid #c8c8c8"></div>
<svg class="ab" style="left:0;top:820px" width="718" height="12"><path d="M32 10 l-3 3 M55 10 l3 3" stroke="#b0b0b0" stroke-width="1.2"/><rect x="286" y="4" width="1" height="8" fill="#bdbdbd"/><rect x="399" y="4" width="1" height="8" fill="#bdbdbd"/><rect x="494" y="4" width="1" height="8" fill="#bdbdbd"/><circle cx="535" cy="13" r="6" fill="none" stroke="#888" stroke-width="1.2"/><path d="M535 9 v5" stroke="#888" stroke-width="1.2"/></svg>
<div class="ab" style="left:113px;top:826px;font-size:12px;line-height:14px;font-weight:bold;color:#217346;white-space:nowrap">Names Used</div>
<div class="ab" style="left:213px;top:826px;font-size:11.6px;line-height:14px;color:#444;white-space:nowrap">Ransomes</div>
<div class="ab" style="left:302px;top:826px;font-size:11.6px;line-height:14px;color:#444;white-space:nowrap">Witheringtons</div>
<div class="ab" style="left:416px;top:826px;font-size:11.6px;line-height:14px;color:#444;white-space:nowrap">All Families</div>
</div>
<div class="win" id="R" style="left:718px;width:732px">
<div style="position:absolute;left:-718px;top:0;width:1450px;height:832px">
<div class="ab" style="left:718px;top:0;width:732px;height:65px;background:#217346"></div>
<div class="ab" style="left:718px;top:65px;width:732px;height:93px;background:#f0f0f0"></div>
<div class="ab" style="left:718px;top:157px;width:732px;height:1px;background:#dadada"></div>
<div class="ab" style="left:718px;top:158px;width:732px;height:47px;background:#e6e6e6"></div>
<svg class="ab" style="left:1130px;top:0" width="320" height="50"><g fill="none" stroke="#1b633b" stroke-width="1.9"><path d="M5 20 q15 -22 40 -12 q20 10 10 26 q-10 12 -22 2 q-8 -10 4 -18 q30 -15 60 10 q20 18 45 10"/><path d="M70 0 q10 18 35 22 q22 3 28 -10 q4 -10 -8 -10 q-12 2 -6 14 q10 18 45 12 q25 -5 30 -25"/><path d="M100 45 q15 -20 40 -15 q18 5 12 22 M150 40 q10 -15 30 -12 q25 5 20 25"/><path d="M185 5 q25 5 35 25 q8 18 28 12 q18 -6 10 -20 q-8 -10 -18 0 q-6 10 6 18 q25 12 50 -8"/><path d="M210 50 q5 -20 25 -22 q20 -2 25 15 M255 0 q5 15 25 18 q20 2 30 -10 q8 -8 -2 -12"/><path d="M290 40 q10 -18 30 -15"/></g></svg>
<svg class="ab" style="left:0;top:0" width="1450" height="160"><rect x="798.5" y="9.5" width="37" height="15" rx="7.5" fill="#fff"/><circle cx="828" cy="17" r="3.6" fill="#217346"/><path d="M852.5 10.5 h11 l2.5 2.5 v11 h-13.5 z" fill="none" stroke="#fff" stroke-width="1.6"/><rect x="855" y="11" width="7" height="4" fill="#fff"/><rect x="855" y="18.5" width="8" height="5" fill="none" stroke="#fff" stroke-width="1.4"/><path d="M883 14 h6 a4.5 4.5 0 0 1 0 9 h-1" fill="none" stroke="#fff" stroke-width="1.8"/><path d="M886 10.5 l-4 3.5 l4 3.5" fill="none" stroke="#fff" stroke-width="1.8"/><polygon points="901,15.5 906,15.5 903.5,18.5" fill="#fff"/><path d="M928 14 h-6 a4.5 4.5 0 0 0 0 9 h1" fill="none" stroke="#5d9c77" stroke-width="1.8"/><path d="M925 10.5 l4 3.5 l-4 3.5" fill="none" stroke="#5d9c77" stroke-width="1.8"/><polygon points="936,15.5 941,15.5 938.5,18.5" fill="#5d9c77"/><path d="M951 23 l-2 -4 q0 -1.5 1.5 -1 l1.5 1.5 v-7 q1.5 -1.5 3 0 v4 h3 q1.5 0 1.5 2 v4 l-1 2 z" fill="#fff"/><path d="M950 13 a3.6 3.6 0 0 1 7 0" fill="none" stroke="#fff" stroke-width="1.3"/><polygon points="968,15.5 973,15.5 970.5,18.5" fill="#fff"/><rect x="989" y="13" width="5.5" height="1.3" fill="#fff"/><polygon points="989,16 994.5,16 991.75,19.25" fill="#fff"/><polygon points="1278.5,17 1283.0,17 1280.75,19.75" fill="#b6d2bf"/><rect x="1424.5" y="12.5" width="12.5" height="9" fill="none" stroke="#9cc0a8" stroke-width="1"/><path d="M1424.5 14.5 h12.5 M1430.75 20 v-4 M1428.5 18 l2.25 -2.25 l2.25 2.25" fill="none" stroke="#9cc0a8" stroke-width="1"/><path d="M1371 53 q0 -1.5 -1.3 -2.8 q-2.2 -2.2 -0.9 -5 q1.3 -2.4 4.2 -2.4 q2.9 0 4.2 2.4 q1.3 2.8 -0.9 5 q-1.3 1.3 -1.3 2.8 z" fill="none" stroke="#fff" stroke-width="1.1"/><path d="M1371 55 h4 M1371.5 57 h3" stroke="#fff" stroke-width="1.1"/><rect x="804.5" y="71" width="1" height="82" fill="#d4d4d4"/><rect x="891.5" y="92" width="1" height="22" fill="#d4d4d4"/><rect x="847.5" y="115" width="1" height="22" fill="#d4d4d4"/><rect x="944.5" y="71" width="1" height="82" fill="#d4d4d4"/><rect x="997.5" y="115" width="1" height="22" fill="#d4d4d4"/><rect x="1057.5" y="71" width="1" height="82" fill="#d4d4d4"/><rect x="1111.5" y="71" width="1" height="82" fill="#d4d4d4"/><rect x="1198.5" y="71" width="1" height="82" fill="#d4d4d4"/><rect x="1368.5" y="71" width="1" height="82" fill="#d4d4d4"/><rect x="732" y="77" width="24.5" height="25" rx="1.5" fill="#e8c170"/><path d="M737 80.5 v-3 h4 v-2.5 q0 -1.5 2.5 -1.5 q2.5 0 2.5 1.5 v2.5 h4 v3 z" fill="#6f6f6f"/><path d="M746.5 85.5 h9 l4 4 v14 h-13 z" fill="#fff" stroke="#6f6f6f" stroke-width="1"/><path d="M755.5 85.5 v4 h4" fill="none" stroke="#6f6f6f"/><polygon points="741,129 746,129 743.5,132.0" fill="#666"/><path d="M771.5 72 l8.5 10.5 M780.5 72 l-8.5 10.5" stroke="#555" stroke-width="1.3"/><circle cx="771.5" cy="84.5" r="2.5" fill="none" stroke="#4a86c8" stroke-width="1.3"/><circle cx="780.5" cy="84.5" r="2.5" fill="none" stroke="#4a86c8" stroke-width="1.3"/><path d="M768.5 96.5 h6 l2.5 2.5 v8 h-8.5 z" fill="#fff" stroke="#555"/><path d="M774.5 100.5 h6 l2.5 2.5 v7 h-8.5 z" fill="#fff" stroke="#555"/><path d="M770 100 h3.5 M770 102.5 h3.5 M776 104 h5 M776 106.5 h5" stroke="#4a86c8" stroke-width="0.9"/><polygon points="790,102.5 795,102.5 792.5,105.5" fill="#666"/><path d="M768.5 126 l7 -4 l3.5 5 l-5.5 5.5 z" fill="#e8b870"/><path d="M775 121.5 l5 -2 l2 3 l-3.5 4z" fill="#555"/><path d="M780 120 l3 -2 l1.5 2 l-2.5 2.5z" fill="#555"/><rect x="809.5" y="69.5" width="86.5" height="22" fill="#fff" stroke="#c6c6c6"/><rect x="897.5" y="69.5" width="42" height="22" fill="#fff" stroke="#c6c6c6"/><polygon points="886.5,79 892.0,79 889.25,82.25" fill="#555"/><polygon points="930,79 935.5,79 932.75,82.25" fill="#555"/><polygon points="878,102.5 883,102.5 880.5,105.5" fill="#666"/><rect x="859" y="107.5" width="9" height="1.2" fill="#555"/><path d="M902.5 109 l4.5 -10 l4.5 10 M904.3 105 h5.4" stroke="#666" fill="none" stroke-width="1.3"/><path d="M910 99 l2.5 -3 l2.5 3z" fill="#4a86c8"/><path d="M925 109 l3.8 -8 l3.8 8 M926.5 105.8 h4.6" stroke="#666" fill="none" stroke-width="1.2"/><path d="M932 96 l5 0 l-2.5 3z" fill="#4a86c8"/><path d="M813 119 h13 M813 125.5 h13 M813 119 v13 M819.5 119 v13 M826 119 v13" stroke="#777" stroke-width="1" stroke-dasharray="1 1.2" fill="none"/><rect x="813" y="131.5" width="13.5" height="1.2" fill="#555"/><polygon points="834,125.5 839,125.5 836.5,128.5" fill="#666"/><path d="M858 124 l6 -6 l6 6 l-6 5 z" fill="#fff" stroke="#555" stroke-width="1.1"/><path d="M869 122 q2.5 2 1.5 5" stroke="#4a86c8" stroke-width="1.6" fill="none"/><rect x="855" y="130.3" width="16" height="3.5" fill="#ffff00"/><polygon points="877,125.5 882,125.5 879.5,128.5" fill="#666"/><path d="M891 129.5 l6 -10 l6 10 M893.5 125.5 h7" stroke="#555" fill="none" stroke-width="1.8"/><rect x="889" y="130.3" width="16" height="3.7" fill="#6f6f6f"/><polygon points="911,125.5 916,125.5 913.5,128.5" fill="#666"/><path d="M793.5 154 v-6.5 h6.5" fill="none" stroke="#888" stroke-width="1"/><path d="M795.5 149.5 l4 4 M800 150.5 v3.5 h-3.5" fill="none" stroke="#777" stroke-width="1"/><path d="M933.5 154 v-6.5 h6.5" fill="none" stroke="#888" stroke-width="1"/><path d="M935.5 149.5 l4 4 M940 150.5 v3.5 h-3.5" fill="none" stroke="#777" stroke-width="1"/><path d="M1046.5 154 v-6.5 h6.5" fill="none" stroke="#888" stroke-width="1"/><path d="M1048.5 149.5 l4 4 M1053 150.5 v3.5 h-3.5" fill="none" stroke="#777" stroke-width="1"/><path d="M1187.5 154 v-6.5 h6.5" fill="none" stroke="#888" stroke-width="1"/><path d="M1189.5 149.5 l4 4 M1194 150.5 v3.5 h-3.5" fill="none" stroke="#777" stroke-width="1"/><rect x="993" y="69" width="22" height="22.5" fill="#c8c8c8"/><rect x="971" y="92" width="22" height="23" fill="#c8c8c8"/><rect x="953" y="72.2" width="14.5" height="1.2" fill="#666"/><rect x="953" y="75.2" width="14.5" height="1.2" fill="#666"/><rect x="953" y="78.2" width="14.5" height="1.2" fill="#666"/><rect x="975" y="75.8" width="14.5" height="1.2" fill="#666"/><rect x="975" y="79" width="14.5" height="1.2" fill="#666"/><rect x="975" y="82.2" width="14.5" height="1.2" fill="#666"/><rect x="997" y="80.8" width="14.5" height="1.2" fill="#666"/><rect x="997" y="84" width="14.5" height="1.2" fill="#666"/><rect x="997" y="87.2" width="14.5" height="1.2" fill="#666"/><rect x="953" y="98" width="14.5" height="1.2" fill="#666"/><rect x="953" y="101.2" width="10" height="1.2" fill="#666"/><rect x="953" y="104.4" width="14.5" height="1.2" fill="#666"/><rect x="953" y="107.6" width="10" height="1.2" fill="#666"/><rect x="975" y="98" width="14.5" height="1.2" fill="#666"/><rect x="977" y="101.2" width="10" height="1.2" fill="#666"/><rect x="975" y="104.4" width="14.5" height="1.2" fill="#666"/><rect x="977" y="107.6" width="10" height="1.2" fill="#666"/><rect x="997" y="98" width="14.5" height="1.2" fill="#666"/><rect x="1001.5" y="101.2" width="10" height="1.2" fill="#666"/><rect x="997" y="104.4" width="14.5" height="1.2" fill="#666"/><rect x="1001.5" y="107.6" width="10" height="1.2" fill="#666"/><rect x="1021.5" y="72.5" width="9" height="5" fill="none" stroke="#666"/><rect x="1021.5" y="81.5" width="9" height="5.5" fill="none" stroke="#666"/><path d="M1024 75 h12 q2 2.5 -1 5 h-6 M1031 78 l-2 2 l2 2 M1023.5 83 h5 M1023.5 85 h5" stroke="#4a86c8" fill="none" stroke-width="1"/><rect x="1021.5" y="95.5" width="14.5" height="14.5" fill="none" stroke="#666"/><path d="M1021.5 99 h14.5 M1021.5 106.5 h14.5 M1028.75 95.5 v3.5 M1028.75 106.5 v3.5" stroke="#666"/><path d="M1023.5 102.75 h10.5 M1025.5 101 l-2 1.75 l2 1.75 M1032 101 l2 1.75 l-2 1.75" stroke="#4a86c8" fill="none" stroke-width="1"/><polygon points="1042.5,102.5 1047.5,102.5 1045.0,105.5" fill="#666"/><rect x="952" y="119" width="16" height="1.2" fill="#666"/><rect x="958" y="123" width="10" height="1.2" fill="#666"/><rect x="958" y="127" width="10" height="1.2" fill="#666"/><rect x="952" y="131" width="16" height="1.2" fill="#666"/><path d="M957 125 h-5 M954.5 122.5 l-2.5 2.5 l2.5 2.5" stroke="#4a86c8" stroke-width="1.5" fill="none"/><rect x="974" y="119" width="16" height="1.2" fill="#666"/><rect x="980" y="123" width="10" height="1.2" fill="#666"/><rect x="980" y="127" width="10" height="1.2" fill="#666"/><rect x="974" y="131" width="16" height="1.2" fill="#666"/><path d="M974 125 h5 M976.5 122.5 l2.5 2.5 l-2.5 2.5" stroke="#4a86c8" stroke-width="1.5" fill="none"/><text x="1004" y="129" font-family="Liberation Sans" font-size="11" fill="#555" transform="rotate(-40 1008 127)">ab</text><path d="M1008.5 132.5 l12 -10 M1016.5 122.5 h4 v4" stroke="#555" fill="none" stroke-width="1.1"/><polygon points="1025,125.5 1030,125.5 1027.5,128.5" fill="#666"/><path d="M1069.5 72.5 h29 M1069.5 87 h29 M1069.5 72.5 v29 M1084 72.5 v29 M1098.5 72.5 v29" stroke="#666" stroke-width="1" stroke-dasharray="1 1.2" fill="none"/><rect x="1069" y="101" width="30" height="1.3" fill="#555"/><polygon points="1081.5,128.5 1087.0,128.5 1084.25,131.75" fill="#666"/><rect x="1116.5" y="69.5" width="77" height="22" fill="#fff" stroke="#c6c6c6"/><polygon points="1183.5,79 1189.0,79 1186.25,82.25" fill="#555"/><text x="1123" y="109" font-family="Liberation Sans" font-size="14.5" fill="#555">$</text><polygon points="1141,102.5 1146,102.5 1143.5,105.5" fill="#666"/><text x="1154.5" y="109" font-family="Liberation Sans" font-size="14" fill="#555">%</text><text x="1179.5" y="105" font-family="Liberation Sans" font-weight="bold" font-size="15" fill="#555">,</text><text x="1123" y="125" font-family="Liberation Sans" font-size="8" fill="#555">.0</text><text x="1119.5" y="132" font-family="Liberation Sans" font-size="8" fill="#555">.00</text><path d="M1125 122 h-5 M1122 120 l-2 2 l2 2" stroke="#4a86c8" stroke-width="1.2" fill="none"/><text x="1142" y="125" font-family="Liberation Sans" font-size="8" fill="#555">.00</text><text x="1147.5" y="132" font-family="Liberation Sans" font-size="8" fill="#555">.0</text><path d="M1141 129 h5 M1144 127 l2 2 l-2 2" stroke="#4a86c8" stroke-width="1.2" fill="none"/><rect x="1206.5" y="72.5" width="13" height="11" fill="#fff" stroke="#666"/><rect x="1207" y="73" width="6" height="3" fill="#e0582c"/><rect x="1207" y="76.5" width="6" height="3" fill="#4a86c8"/><rect x="1207" y="80" width="6" height="3" fill="#e0582c"/><rect x="1213.5" y="80.5" width="8.5" height="7" fill="#fff" stroke="#666"/><path d="M1215.5 83 h4.5 M1215.5 85 h4.5 M1219 81.5 l-2 5" stroke="#444" stroke-width="0.8"/><rect x="1206.5" y="95.5" width="15" height="12" fill="#fff" stroke="#777"/><rect x="1210" y="99" width="11" height="8" fill="#c5d9f1"/><path d="M1206.5 99 h15 M1206.5 103 h15 M1210.5 95.5 v12 M1215.5 95.5 v12" stroke="#999" stroke-width="0.8"/><path d="M1212 110 q1 -4 4 -5 l5 -6 l1.5 1.5 l-5 6 q-1 3 -5.5 3.5z" fill="#4a86c8"/><path d="M1218 102 l4 -5 l1.5 1.5 l-4 5z" fill="#666"/><rect x="1206.5" y="118.5" width="15" height="12" fill="#fff" stroke="#777"/><rect x="1210" y="122" width="11" height="8" fill="#c5d9f1"/><path d="M1212 133 q1 -4 4 -5 l5 -6 l1.5 1.5 l-5 6 q-1 3 -5.5 3.5z" fill="#4a86c8"/><path d="M1218 125 l4 -5 l1.5 1.5 l-4 5z" fill="#666"/><polygon points="1352,79.5 1357,79.5 1354.5,82.5" fill="#666"/><polygon points="1311.5,102.5 1316.5,102.5 1314.0,105.5" fill="#666"/><polygon points="1281,125.5 1286,125.5 1283.5,128.5" fill="#666"/><rect x="1376.5" y="72.5" width="7" height="15" fill="none" stroke="#666"/><path d="M1376.5 77.5 h7 M1376.5 82.5 h7" stroke="#666"/><rect x="1384.5" y="77.5" width="7" height="5" fill="#c5d9f1" stroke="#4a86c8"/><path d="M1383 80 h-5 M1380 78 l-2 2 l2 2" stroke="#4a86c8" fill="none" stroke-width="1.1"/><rect x="1376.5" y="95.5" width="7" height="15" fill="none" stroke="#666"/><path d="M1376.5 100.5 h7 M1376.5 105.5 h7" stroke="#666"/><path d="M1386 99 l6 6 M1392 99 l-6 6" stroke="#e0582c" stroke-width="1.4"/><rect x="1376.5" y="121.5" width="14.5" height="12" fill="none" stroke="#666"/><path d="M1376.5 125.5 h14.5 M1376.5 129.5 h14.5 M1381.5 121.5 v12 M1386.5 121.5 v12" stroke="#666" stroke-width="0.9"/><rect x="1381.5" y="125.5" width="5" height="4" fill="#4a86c8"/><path d="M1376.5 119 h14.5 M1378.5 117.5 l-2 1.5 l2 1.5 M1389 117.5 l2 1.5 l-2 1.5" stroke="#4a86c8" fill="none" stroke-width="1"/><polygon points="1434,79.5 1439.5,79.5 1436.75,82.75" fill="#666"/><polygon points="1437.5,102.5 1443.0,102.5 1440.25,105.75" fill="#666"/><polygon points="1436,125.5 1441.5,125.5 1438.75,128.75" fill="#666"/></svg>
<div class="ab" style="left:742px;top:11.2px;font-size:11.6px;line-height:14px;color:#fff;white-space:nowrap;">AutoSave</div>
<div class="ab" style="left:805px;top:11.4px;font-size:9.5px;line-height:14px;color:#217346;white-space:nowrap;letter-spacing:-0.3px">On</div>
<div class="ab" style="left:1055px;top:11.5px;font-size:11.6px;line-height:14px;color:#b6d2bf;white-space:nowrap;">Ransome's Legacy Characters &nbsp;- &nbsp;Saving...</div>
<div class="ab" style="left:1338.5px;top:10.2px;font-size:11.6px;line-height:14px;color:#c5dccd;white-space:nowrap;">Kaye Dacus</div>
<div class="ab" style="left:739.5px;top:44.1px;font-size:11.8px;line-height:14px;color:#fff;white-space:nowrap;">File</div>
<div class="ab" style="left:855.5px;top:44.1px;font-size:11.8px;line-height:14px;color:#fff;white-space:nowrap;">Insert</div>
<div class="ab" style="left:913px;top:44.1px;font-size:11.8px;line-height:14px;color:#fff;white-space:nowrap;">Draw</div>
<div class="ab" style="left:969px;top:44.1px;font-size:11.8px;line-height:14px;color:#fff;white-space:nowrap;">Page Layout</div>
<div class="ab" style="left:1063.5px;top:44.1px;font-size:11.8px;line-height:14px;color:#fff;white-space:nowrap;">Formulas</div>
<div class="ab" style="left:1141px;top:44.1px;font-size:11.8px;line-height:14px;color:#fff;white-space:nowrap;">Data</div>
<div class="ab" style="left:1194px;top:44.1px;font-size:11.8px;line-height:14px;color:#fff;white-space:nowrap;">Review</div>
<div class="ab" style="left:1260px;top:44.1px;font-size:11.8px;line-height:14px;color:#fff;white-space:nowrap;">View</div>
<div class="ab" style="left:1314px;top:44.1px;font-size:11.8px;line-height:14px;color:#fff;white-space:nowrap;">Help</div>
<div class="ab" style="left:1385.5px;top:44.1px;font-size:11.8px;line-height:14px;color:#fff;white-space:nowrap;">Tell me</div>
<div class="ab" style="left:780px;top:36px;width:60px;height:29px;background:#f0f0f0"></div>
<div class="ab" style="left:793px;top:44.1px;font-size:11.8px;line-height:14px;color:#217346;white-space:nowrap;">Home</div>
<div class="ab" style="left:684.5px;width:120px;text-align:center;top:107.60000000000001px;font-size:11.5px;line-height:14px;color:#3b3b3b;white-space:nowrap">Paste</div>
<div class="ab" style="left:812.5px;top:73.5px;font-size:12.2px;line-height:14px;color:#222;white-space:nowrap;">Calibri</div>
<div class="ab" style="left:900.5px;top:73.5px;font-size:12.2px;line-height:14px;color:#222;white-space:nowrap;">11</div>
<div class="ab" style="left:815px;top:95px;font-size:12px;font-weight:bold;color:#555">B</div>
<div class="ab" style="left:837px;top:93px;font-family:'Liberation Serif';font-size:15px;font-weight:bold;font-style:italic;color:#555">I</div>
<div class="ab" style="left:859px;top:95px;font-size:12px;color:#555;font-weight:bold">U</div>
<div class="ab" style="left:1024.0px;width:120px;text-align:center;top:107.60000000000001px;font-size:11.5px;line-height:14px;color:#3b3b3b;white-space:nowrap">Borders</div>
<div class="ab" style="left:1119.5px;top:73.6px;font-size:11.8px;line-height:14px;color:#222;white-space:nowrap;">General</div>
<div class="ab" style="left:1225px;top:73.6px;font-size:12.2px;line-height:14px;color:#3b3b3b;white-space:nowrap;">Conditional Formatting</div>
<div class="ab" style="left:1225px;top:96.89999999999999px;font-size:11.7px;line-height:14px;color:#3b3b3b;white-space:nowrap;">Format as Table</div>
<div class="ab" style="left:1225px;top:119.99999999999999px;font-size:11.2px;line-height:14px;color:#3b3b3b;white-space:nowrap;">Cell Styles</div>
<div class="ab" style="left:1395.5px;top:73.8px;font-size:11.5px;line-height:14px;color:#3b3b3b;white-space:nowrap;">Insert</div>
<div class="ab" style="left:1395.5px;top:97.0px;font-size:11.4px;line-height:14px;color:#3b3b3b;white-space:nowrap;">Delete</div>
<div class="ab" style="left:1395.5px;top:119.69999999999999px;font-size:12px;line-height:14px;color:#3b3b3b;white-space:nowrap;">Format</div>
<div class="ab" style="left:693.5px;width:120px;text-align:center;top:142.8px;font-size:11.2px;line-height:14px;color:#595959;white-space:nowrap">Clipboard</div>
<div class="ab" style="left:806.0px;width:120px;text-align:center;top:142.8px;font-size:11.2px;line-height:14px;color:#595959;white-space:nowrap">Font</div>
<div class="ab" style="left:932.5px;width:120px;text-align:center;top:142.8px;font-size:11.2px;line-height:14px;color:#595959;white-space:nowrap">Alignment</div>
<div class="ab" style="left:1024.0px;width:120px;text-align:center;top:142.8px;font-size:11.2px;line-height:14px;color:#595959;white-space:nowrap">Borders</div>
<div class="ab" style="left:1086.5px;width:120px;text-align:center;top:142.8px;font-size:11.2px;line-height:14px;color:#595959;white-space:nowrap">Number</div>
<div class="ab" style="left:1223.5px;width:120px;text-align:center;top:142.8px;font-size:11.2px;line-height:14px;color:#595959;white-space:nowrap">Styles</div>
<div class="ab" style="left:1350.0px;width:120px;text-align:center;top:142.8px;font-size:11.2px;line-height:14px;color:#595959;white-space:nowrap">Cells</div>
<div class="ab" style="left:724px;top:169px;width:102px;height:26px;background:#fff;border:1px solid #c6c6c6"></div>
<div class="ab" style="left:731px;top:175.7px;font-size:13px;line-height:14px;color:#222;white-space:nowrap;">F7</div>
<div class="ab" style="left:856px;top:169px;width:109px;height:26px;background:#fff;border:1px solid #c6c6c6"></div>
<div class="ab" style="left:969px;top:169px;width:490px;height:26px;background:#fff;border:1px solid #c6c6c6"></div>
<div class="ab" style="left:981px;top:176.4px;font-size:14px;line-height:14px;color:#222;white-space:nowrap;">Eleanor Charlotte</div>
<div class="ab" style="left:941px;top:171px;font-family:'Liberation Serif';font-style:italic;font-weight:bold;font-size:14px;color:#555">f<span style="font-size:11px">x</span></div>
<svg class="ab" style="left:0;top:160px" width="1450" height="45"><g transform="translate(0,-160)"><polygon points="811.5,179 819.0,179 815.25,183.25" fill="#777"/><circle cx="840.5" cy="177.5" r="0.9" fill="#999"/><circle cx="840.5" cy="181.5" r="0.9" fill="#999"/><circle cx="840.5" cy="185.5" r="0.9" fill="#999"/><path d="M869.5 175.5 l11 11 M880.5 175.5 l-11 11" stroke="#b4b4b4" stroke-width="1.4"/><path d="M905 181 l4 4.5 l8.5 -9.5" stroke="#b4b4b4" stroke-width="2" fill="none"/></g></svg>
<div style="position:absolute;left:719px;top:205px;width:731px;height:621px;background:#fff;overflow:hidden">
<div class="hdr" style="left:0;top:0;width:731px;height:16px"></div>
<div class="hdr" style="left:0;top:16px;width:25px;height:605px"></div>
<svg style="position:absolute;left:0;top:0" width="25" height="16"><polygon points="22,5 22,13 14,13" fill="#b9b9b9"/></svg>
<div style="position:absolute;left:112px;top:16px;width:1px;height:605px;background:#d4d4d4"></div>
<div style="position:absolute;left:112px;top:3px;width:1px;height:13px;background:#bdbdbd"></div>
<div class="chs" style="left:26px;top:0;width:86px">A</div>
<div style="position:absolute;left:207px;top:16px;width:1px;height:605px;background:#d4d4d4"></div>
<div style="position:absolute;left:207px;top:3px;width:1px;height:13px;background:#bdbdbd"></div>
<div class="chs" style="left:113px;top:0;width:94px">B</div>
<div style="position:absolute;left:248px;top:16px;width:1px;height:605px;background:#d4d4d4"></div>
<div style="position:absolute;left:248px;top:3px;width:1px;height:13px;background:#bdbdbd"></div>
<div class="chs" style="left:208px;top:0;width:40px">C</div>
<div style="position:absolute;left:285px;top:16px;width:1px;height:605px;background:#d4d4d4"></div>
<div style="position:absolute;left:285px;top:3px;width:1px;height:13px;background:#bdbdbd"></div>
<div class="chs" style="left:249px;top:0;width:36px">D</div>
<div style="position:absolute;left:300px;top:16px;width:1px;height:605px;background:#d4d4d4"></div>
<div style="position:absolute;left:300px;top:3px;width:1px;height:13px;background:#bdbdbd"></div>
<div class="chs" style="left:286px;top:0;width:14px">E</div>
<div style="position:absolute;left:431px;top:16px;width:1px;height:605px;background:#d4d4d4"></div>
<div style="position:absolute;left:431px;top:3px;width:1px;height:13px;background:#bdbdbd"></div>
<div class="chs" style="left:301px;top:0;width:130px">F</div>
<div style="position:absolute;left:518px;top:16px;width:1px;height:605px;background:#d4d4d4"></div>
<div style="position:absolute;left:518px;top:3px;width:1px;height:13px;background:#bdbdbd"></div>
<div class="chs" style="left:432px;top:0;width:86px">G</div>
<div style="position:absolute;left:553px;top:16px;width:1px;height:605px;background:#d4d4d4"></div>
<div style="position:absolute;left:553px;top:3px;width:1px;height:13px;background:#bdbdbd"></div>
<div class="chs" style="left:519px;top:0;width:34px">H</div>
<div style="position:absolute;left:594px;top:16px;width:1px;height:605px;background:#d4d4d4"></div>
<div style="position:absolute;left:594px;top:3px;width:1px;height:13px;background:#bdbdbd"></div>
<div class="chs" style="left:554px;top:0;width:40px">I</div>
<div style="position:absolute;left:981px;top:16px;width:1px;height:605px;background:#d4d4d4"></div>
<div style="position:absolute;left:981px;top:3px;width:1px;height:13px;background:#bdbdbd"></div>
<div style="position:absolute;left:25px;top:36px;width:1450px;height:1px;background:#d4d4d4"></div>
<div style="position:absolute;left:0;top:36px;width:25px;height:1px;background:#b4b4b4"></div>
<div class="rns" style="top:18px;height:19px;line-height:20px">1</div>
<div style="position:absolute;left:25px;top:44px;width:1450px;height:1px;background:#d4d4d4"></div>
<div style="position:absolute;left:0;top:44px;width:25px;height:1px;background:#b4b4b4"></div>
<div class="rns" style="top:36px;height:8px;line-height:20px;overflow:hidden"><span style="position:relative;top:-12px">2</span></div>
<div style="position:absolute;left:25px;top:64px;width:1450px;height:1px;background:#d4d4d4"></div>
<div style="position:absolute;left:0;top:64px;width:25px;height:1px;background:#b4b4b4"></div>
<div class="rns" style="top:45px;height:20px;line-height:21px">3</div>
<div style="position:absolute;left:25px;top:84px;width:1450px;height:1px;background:#d4d4d4"></div>
<div style="position:absolute;left:0;top:84px;width:25px;height:1px;background:#b4b4b4"></div>
<div class="rns" style="top:65px;height:20px;line-height:21px">4</div>
<div style="position:absolute;left:25px;top:104px;width:1450px;height:1px;background:#d4d4d4"></div>
<div style="position:absolute;left:0;top:104px;width:25px;height:1px;background:#b4b4b4"></div>
<div class="rns" style="top:85px;height:20px;line-height:21px">5</div>
<div style="position:absolute;left:25px;top:125px;width:1450px;height:1px;background:#d4d4d4"></div>
<div style="position:absolute;left:0;top:125px;width:25px;height:1px;background:#b4b4b4"></div>
<div class="rns" style="top:105px;height:21px;line-height:22px">6</div>
<div style="position:absolute;left:25px;top:145px;width:1450px;height:1px;background:#d4d4d4"></div>
<div style="position:absolute;left:0;top:145px;width:25px;height:1px;background:#b4b4b4"></div>
<div class="rns" style="top:126px;height:20px;line-height:21px">7</div>
<div style="position:absolute;left:25px;top:166px;width:1450px;height:1px;background:#d4d4d4"></div>
<div style="position:absolute;left:0;top:166px;width:25px;height:1px;background:#b4b4b4"></div>
<div class="rns" style="top:146px;height:21px;line-height:22px">8</div>
<div style="position:absolute;left:25px;top:186px;width:1450px;height:1px;background:#d4d4d4"></div>
<div style="position:absolute;left:0;top:186px;width:25px;height:1px;background:#b4b4b4"></div>
<div class="rns" style="top:167px;height:20px;line-height:21px">12</div>
<div style="position:absolute;left:25px;top:207px;width:1450px;height:1px;background:#d4d4d4"></div>
<div style="position:absolute;left:0;top:207px;width:25px;height:1px;background:#b4b4b4"></div>
<div class="rns" style="top:187px;height:21px;line-height:22px">13</div>
<div style="position:absolute;left:25px;top:227px;width:1450px;height:1px;background:#d4d4d4"></div>
<div style="position:absolute;left:0;top:227px;width:25px;height:1px;background:#b4b4b4"></div>
<div class="rns" style="top:208px;height:20px;line-height:21px">14</div>
<div style="position:absolute;left:25px;top:248px;width:1450px;height:1px;background:#d4d4d4"></div>
<div style="position:absolute;left:0;top:248px;width:25px;height:1px;background:#b4b4b4"></div>
<div class="rns" style="top:228px;height:21px;line-height:22px">15</div>
<div style="position:absolute;left:25px;top:256px;width:1450px;height:1px;background:#d4d4d4"></div>
<div style="position:absolute;left:0;top:256px;width:25px;height:1px;background:#b4b4b4"></div>
<div class="rns" style="top:248px;height:8px;line-height:20px;overflow:hidden"><span style="position:relative;top:-12px">16</span></div>
<div style="position:absolute;left:25px;top:275px;width:1450px;height:1px;background:#d4d4d4"></div>
<div style="position:absolute;left:0;top:275px;width:25px;height:1px;background:#b4b4b4"></div>
<div class="rns" style="top:257px;height:19px;line-height:20px">17</div>
<div style="position:absolute;left:25px;top:283px;width:1450px;height:1px;background:#d4d4d4"></div>
<div style="position:absolute;left:0;top:283px;width:25px;height:1px;background:#b4b4b4"></div>
<div class="rns" style="top:275px;height:8px;line-height:20px;overflow:hidden"><span style="position:relative;top:-12px">18</span></div>
<div style="position:absolute;left:25px;top:303px;width:1450px;height:1px;background:#d4d4d4"></div>
<div style="position:absolute;left:0;top:303px;width:25px;height:1px;background:#b4b4b4"></div>
<div class="rns" style="top:284px;height:20px;line-height:21px">19</div>
<div style="position:absolute;left:25px;top:323px;width:1450px;height:1px;background:#d4d4d4"></div>
<div style="position:absolute;left:0;top:323px;width:25px;height:1px;background:#b4b4b4"></div>
<div class="rns" style="top:304px;height:20px;line-height:21px">20</div>
<div style="position:absolute;left:25px;top:343px;width:1450px;height:1px;background:#d4d4d4"></div>
<div style="position:absolute;left:0;top:343px;width:25px;height:1px;background:#b4b4b4"></div>
<div class="rns" style="top:324px;height:20px;line-height:21px">21</div>
<div style="position:absolute;left:25px;top:364px;width:1450px;height:1px;background:#d4d4d4"></div>
<div style="position:absolute;left:0;top:364px;width:25px;height:1px;background:#b4b4b4"></div>
<div class="rns" style="top:344px;height:21px;line-height:22px">22</div>
<div style="position:absolute;left:25px;top:384px;width:1450px;height:1px;background:#d4d4d4"></div>
<div style="position:absolute;left:0;top:384px;width:25px;height:1px;background:#b4b4b4"></div>
<div class="rns" style="top:365px;height:20px;line-height:21px">26</div>
<div style="position:absolute;left:25px;top:405px;width:1450px;height:1px;background:#d4d4d4"></div>
<div style="position:absolute;left:0;top:405px;width:25px;height:1px;background:#b4b4b4"></div>
<div class="rns" style="top:385px;height:21px;line-height:22px">27</div>
<div style="position:absolute;left:25px;top:413px;width:1450px;height:1px;background:#d4d4d4"></div>
<div style="position:absolute;left:0;top:413px;width:25px;height:1px;background:#b4b4b4"></div>
<div class="rns" style="top:405px;height:8px;line-height:20px;overflow:hidden"><span style="position:relative;top:-12px">28</span></div>
<div style="position:absolute;left:25px;top:432px;width:1450px;height:1px;background:#d4d4d4"></div>
<div style="position:absolute;left:0;top:432px;width:25px;height:1px;background:#b4b4b4"></div>
<div class="rns" style="top:414px;height:19px;line-height:20px">29</div>
<div style="position:absolute;left:25px;top:440px;width:1450px;height:1px;background:#d4d4d4"></div>
<div style="position:absolute;left:0;top:440px;width:25px;height:1px;background:#b4b4b4"></div>
<div class="rns" style="top:432px;height:8px;line-height:20px;overflow:hidden"><span style="position:relative;top:-12px">30</span></div>
<div style="position:absolute;left:25px;top:460px;width:1450px;height:1px;background:#d4d4d4"></div>
<div style="position:absolute;left:0;top:460px;width:25px;height:1px;background:#b4b4b4"></div>
<div class="rns" style="top:441px;height:20px;line-height:21px">31</div>
<div style="position:absolute;left:25px;top:480px;width:1450px;height:1px;background:#d4d4d4"></div>
<div style="position:absolute;left:0;top:480px;width:25px;height:1px;background:#b4b4b4"></div>
<div class="rns" style="top:461px;height:20px;line-height:21px">32</div>
<div style="position:absolute;left:25px;top:501px;width:1450px;height:1px;background:#d4d4d4"></div>
<div style="position:absolute;left:0;top:501px;width:25px;height:1px;background:#b4b4b4"></div>
<div class="rn" style="top:481px;height:21px;line-height:22px">33</div>
<div style="position:absolute;left:25px;top:521px;width:1450px;height:1px;background:#d4d4d4"></div>
<div style="position:absolute;left:0;top:521px;width:25px;height:1px;background:#b4b4b4"></div>
<div class="rn" style="top:502px;height:20px;line-height:21px">34</div>
<div style="position:absolute;left:25px;top:541px;width:1450px;height:1px;background:#d4d4d4"></div>
<div style="position:absolute;left:0;top:541px;width:25px;height:1px;background:#b4b4b4"></div>
<div class="rn" style="top:522px;height:20px;line-height:21px">35</div>
<div style="position:absolute;left:25px;top:562px;width:1450px;height:1px;background:#d4d4d4"></div>
<div style="position:absolute;left:0;top:562px;width:25px;height:1px;background:#b4b4b4"></div>
<div class="rn" style="top:542px;height:21px;line-height:22px">36</div>
<div style="position:absolute;left:25px;top:582px;width:1450px;height:1px;background:#d4d4d4"></div>
<div style="position:absolute;left:0;top:582px;width:25px;height:1px;background:#b4b4b4"></div>
<div class="rn" style="top:563px;height:20px;line-height:21px">37</div>
<div style="position:absolute;left:25px;top:603px;width:1450px;height:1px;background:#d4d4d4"></div>
<div style="position:absolute;left:0;top:603px;width:25px;height:1px;background:#b4b4b4"></div>
<div class="rn" style="top:583px;height:21px;line-height:22px">38</div>
<div style="position:absolute;left:25px;top:624px;width:1450px;height:1px;background:#d4d4d4"></div>
<div style="position:absolute;left:0;top:624px;width:25px;height:1px;background:#b4b4b4"></div>
<div class="rn" style="top:604px;height:21px;line-height:22px">39</div>
<div style="position:absolute;left:0;top:16px;width:1450px;height:1px;background:#ababab"></div>
<div style="position:absolute;left:25px;top:0;width:1px;height:621px;background:#ababab"></div>
<div style="position:absolute;left:26px;top:36px;width:705px;height:8px;background:#7f0000"></div>
<div style="position:absolute;left:26px;top:248px;width:705px;height:8px;background:#7f0000"></div>
<div style="position:absolute;left:26px;top:275px;width:705px;height:8px;background:#0000ff"></div>
<div style="position:absolute;left:26px;top:405px;width:705px;height:8px;background:#0000ff"></div>
<div style="position:absolute;left:26px;top:432px;width:705px;height:8px;background:#ff9900"></div>
<div style="position:absolute;left:26px;top:125px;width:705px;height:20px;background:#ffff00"></div>
<div style="position:absolute;left:26px;top:145px;width:705px;height:21px;background:#ffff00"></div>
<div style="position:absolute;left:26px;top:323px;width:705px;height:20px;background:#ffff00"></div>
<div style="position:absolute;left:26px;top:343px;width:705px;height:21px;background:#ffff00"></div>
<div style="position:absolute;left:286px;top:44px;width:15px;height:20px;background:#7f0000"></div>
<div style="position:absolute;left:286px;top:64px;width:15px;height:20px;background:#7f0000"></div>
<div style="position:absolute;left:286px;top:84px;width:15px;height:20px;background:#7f0000"></div>
<div style="position:absolute;left:286px;top:104px;width:15px;height:21px;background:#7f0000"></div>
<div style="position:absolute;left:286px;top:166px;width:15px;height:20px;background:#7f0000"></div>
<div style="position:absolute;left:286px;top:186px;width:15px;height:21px;background:#7f0000"></div>
<div style="position:absolute;left:286px;top:207px;width:15px;height:20px;background:#7f0000"></div>
<div style="position:absolute;left:286px;top:227px;width:15px;height:21px;background:#7f0000"></div>
<div style="position:absolute;left:286px;top:283px;width:15px;height:20px;background:#0000ff"></div>
<div style="position:absolute;left:286px;top:303px;width:15px;height:20px;background:#0000ff"></div>
<div style="position:absolute;left:286px;top:364px;width:15px;height:20px;background:#0000ff"></div>
<div style="position:absolute;left:286px;top:384px;width:15px;height:21px;background:#7f0000"></div>
<div style="position:absolute;left:286px;top:440px;width:15px;height:20px;background:#ff9900"></div>
<div style="position:absolute;left:286px;top:460px;width:15px;height:20px;background:#ff9900"></div>
<div style="position:absolute;left:286px;top:480px;width:15px;height:21px;background:#ff9900"></div>
<div style="position:absolute;left:286px;top:501px;width:15px;height:20px;background:#7f0000"></div>
<div style="position:absolute;left:286px;top:521px;width:15px;height:20px;background:#ff9900"></div>
<div style="position:absolute;left:286px;top:541px;width:15px;height:21px;background:#ff9900"></div>
<div style="position:absolute;left:286px;top:562px;width:15px;height:20px;background:#ff9900"></div>
<div style="position:absolute;left:286px;top:582px;width:15px;height:21px;background:#ff9900"></div>
<div style="position:absolute;left:286px;top:603px;width:15px;height:21px;background:#ff9900"></div>
<div style="position:absolute;left:26px;top:83px;width:260px;height:2px;background:#000"></div>
<div style="position:absolute;left:301px;top:83px;width:430px;height:2px;background:#000"></div>
<div style="position:absolute;left:26px;top:124px;width:260px;height:2px;background:#000"></div>
<div style="position:absolute;left:301px;top:124px;width:430px;height:2px;background:#000"></div>
<div style="position:absolute;left:286px;top:124px;width:15px;height:2px;background:#000"></div>
<div style="position:absolute;left:26px;top:165px;width:260px;height:2px;background:#000"></div>
<div style="position:absolute;left:301px;top:165px;width:430px;height:2px;background:#000"></div>
<div style="position:absolute;left:286px;top:165px;width:15px;height:2px;background:#000"></div>
<div style="position:absolute;left:26px;top:206px;width:260px;height:2px;background:#000"></div>
<div style="position:absolute;left:301px;top:206px;width:430px;height:2px;background:#000"></div>
<div style="position:absolute;left:26px;top:247px;width:260px;height:2px;background:#000"></div>
<div style="position:absolute;left:301px;top:247px;width:430px;height:2px;background:#000"></div>
<div style="position:absolute;left:286px;top:247px;width:15px;height:2px;background:#000"></div>
<div style="position:absolute;left:26px;top:322px;width:260px;height:2px;background:#000"></div>
<div style="position:absolute;left:301px;top:322px;width:430px;height:2px;background:#000"></div>
<div style="position:absolute;left:286px;top:322px;width:15px;height:2px;background:#000"></div>
<div style="position:absolute;left:26px;top:363px;width:260px;height:2px;background:#000"></div>
<div style="position:absolute;left:301px;top:363px;width:430px;height:2px;background:#000"></div>
<div style="position:absolute;left:286px;top:363px;width:15px;height:2px;background:#000"></div>
<div style="position:absolute;left:26px;top:404px;width:260px;height:2px;background:#000"></div>
<div style="position:absolute;left:301px;top:404px;width:430px;height:2px;background:#000"></div>
<div style="position:absolute;left:286px;top:404px;width:15px;height:2px;background:#000"></div>
<div style="position:absolute;left:26px;top:479px;width:260px;height:2px;background:#000"></div>
<div style="position:absolute;left:301px;top:479px;width:430px;height:2px;background:#000"></div>
<div style="position:absolute;left:26px;top:520px;width:260px;height:2px;background:#000"></div>
<div style="position:absolute;left:301px;top:520px;width:430px;height:2px;background:#000"></div>
<div style="position:absolute;left:26px;top:561px;width:260px;height:2px;background:#000"></div>
<div style="position:absolute;left:301px;top:561px;width:430px;height:2px;background:#000"></div>
<div style="position:absolute;left:26px;top:602px;width:260px;height:2px;background:#000"></div>
<div style="position:absolute;left:301px;top:602px;width:430px;height:2px;background:#000"></div>
<div class="c cc" style="left:518px;width:35px;top:18px;height:19px;line-height:20px;font-weight:bold;letter-spacing:-0.8px;">1843</div>
<div class="c" style="left:28px;top:45px;height:20px;line-height:21px;">Paul</div>
<div class="c" style="left:115px;top:45px;height:20px;line-height:21px;">McGann</div>
<div class="c cc" style="left:207px;width:41px;top:45px;height:20px;line-height:21px;letter-spacing:-0.8px;">1959</div>
<div class="c cc" style="left:248px;width:37px;top:45px;height:20px;line-height:21px;letter-spacing:-0.8px;">5.10</div>
<div class="c" style="left:303px;top:45px;height:20px;line-height:21px;">William</div>
<div class="c" style="left:434px;top:45px;height:20px;line-height:21px;">Ransome</div>
<div class="c cc" style="left:518px;width:35px;top:45px;height:20px;line-height:21px;letter-spacing:-0.8px;">63</div>
<div class="c cc" style="left:553px;width:41px;top:45px;height:20px;line-height:21px;letter-spacing:-0.8px;">1780</div>
<div class="c" style="left:597px;top:45px;height:20px;line-height:21px;">Retired Admiral</div>
<div class="c" style="left:28px;top:65px;height:20px;line-height:21px;">Anna</div>
<div class="c" style="left:115px;top:65px;height:20px;line-height:21px;">Friel</div>
<div class="c cc" style="left:207px;width:41px;top:65px;height:20px;line-height:21px;letter-spacing:-0.8px;">1976</div>
<div class="c cc" style="left:248px;width:37px;top:65px;height:20px;line-height:21px;letter-spacing:-0.8px;">5.02</div>
<div class="c" style="left:303px;top:65px;height:20px;line-height:21px;">Julia</div>
<div class="c" style="left:434px;top:65px;height:20px;line-height:21px;">Witherington</div>
<div class="c cc" style="left:518px;width:35px;top:65px;height:20px;line-height:21px;letter-spacing:-0.8px;">58</div>
<div class="c cc" style="left:553px;width:41px;top:65px;height:20px;line-height:21px;letter-spacing:-0.8px;">1785</div>
<div class="c" style="left:597px;top:65px;height:20px;line-height:21px;">Admiral's wife, runs the household</div>
<div class="c cc" style="left:25px;width:87px;top:85px;height:20px;line-height:21px;">Tom</div>
<div class="c cc" style="left:112px;width:95px;top:85px;height:20px;line-height:21px;">Mison</div>
<div class="c cc" style="left:207px;width:41px;top:85px;height:20px;line-height:21px;letter-spacing:-0.8px;">1982</div>
<div class="c cc" style="left:248px;width:37px;top:85px;height:20px;line-height:21px;letter-spacing:-0.8px;">6.01</div>
<div class="c cc" style="left:300px;width:131px;top:85px;height:20px;line-height:21px;">Edward William</div>
<div class="c cc" style="left:431px;width:87px;top:85px;height:20px;line-height:21px;">Ransome</div>
<div class="c cc" style="left:518px;width:35px;top:85px;height:20px;line-height:21px;letter-spacing:-0.8px;">26</div>
<div class="c cc" style="left:553px;width:41px;top:85px;height:20px;line-height:21px;letter-spacing:-0.8px;">1817</div>
<div class="c" style="left:597px;top:85px;height:20px;line-height:21px;">Captain, Royal Navy</div>
<div class="c cc" style="left:25px;width:87px;top:105px;height:21px;line-height:22px;color:#7f7f7f;font-style:italic;">Cara</div>
<div class="c cc" style="left:112px;width:95px;top:105px;height:21px;line-height:22px;color:#7f7f7f;font-style:italic;">Theobold</div>
<div class="c cc" style="left:207px;width:41px;top:105px;height:21px;line-height:22px;color:#7f7f7f;font-style:italic;letter-spacing:-0.8px;">1990</div>
<div class="c cc" style="left:248px;width:37px;top:105px;height:21px;line-height:22px;color:#7f7f7f;font-style:italic;letter-spacing:-0.8px;">5.05</div>
<div class="c cc" style="left:300px;width:131px;top:105px;height:21px;line-height:22px;color:#7f7f7f;font-style:italic;">Clara</div>
<div class="c cc" style="left:431px;width:87px;top:105px;height:21px;line-height:22px;color:#7f7f7f;font-style:italic;">Eckley-Hibbitt</div>
<div class="c cc" style="left:518px;width:35px;top:105px;height:21px;line-height:22px;color:#7f7f7f;font-style:italic;letter-spacing:-0.8px;">21</div>
<div class="c cc" style="left:553px;width:41px;top:105px;height:21px;line-height:22px;color:#7f7f7f;font-style:italic;letter-spacing:-0.8px;">1822</div>
<div class="c cc" style="left:25px;width:87px;top:126px;height:20px;line-height:21px;">Karen</div>
<div class="c cc" style="left:112px;width:95px;top:126px;height:20px;line-height:21px;">Gillan</div>
<div class="c cc" style="left:207px;width:41px;top:126px;height:20px;line-height:21px;letter-spacing:-0.8px;">1987</div>
<div class="c cc" style="left:248px;width:37px;top:126px;height:20px;line-height:21px;letter-spacing:-0.8px;">5.10</div>
<div class="c cc" style="left:300px;width:131px;top:126px;height:20px;line-height:21px;">Eleanor Charlotte</div>
<div class="c cc" style="left:431px;width:87px;top:126px;height:20px;line-height:21px;">Ransome</div>
<div class="c cc" style="left:518px;width:35px;top:126px;height:20px;line-height:21px;letter-spacing:-0.8px;">23</div>
<div class="c cc" style="left:553px;width:41px;top:126px;height:20px;line-height:21px;letter-spacing:-0.8px;">1820</div>
<div class="c cc" style="left:25px;width:87px;top:146px;height:21px;line-height:22px;">Arthur</div>
<div class="c cc" style="left:112px;width:95px;top:146px;height:21px;line-height:22px;">Darvill</div>
<div class="c cc" style="left:207px;width:41px;top:146px;height:21px;line-height:22px;letter-spacing:-0.8px;">1982</div>
<div class="c cc" style="left:248px;width:37px;top:146px;height:21px;line-height:22px;letter-spacing:-0.8px;">5.11</div>
<div class="c cc" style="left:300px;width:131px;top:146px;height:21px;line-height:22px;">James Barstow</div>
<div class="c cc" style="left:431px;width:87px;top:146px;height:21px;line-height:22px;">Yates</div>
<div class="c cc" style="left:518px;width:35px;top:146px;height:21px;line-height:22px;letter-spacing:-0.8px;">28</div>
<div class="c cc" style="left:553px;width:41px;top:146px;height:21px;line-height:22px;letter-spacing:-0.8px;">1815</div>
<div class="c" style="left:597px;top:146px;height:21px;line-height:22px;">Heir to an Earldom</div>
<div class="c cc" style="left:25px;width:87px;top:167px;height:20px;line-height:21px;">Ben</div>
<div class="c cc" style="left:112px;width:95px;top:167px;height:20px;line-height:21px;">Aldridge</div>
<div class="c cc" style="left:207px;width:41px;top:167px;height:20px;line-height:21px;letter-spacing:-0.8px;">1985</div>
<div class="c cc" style="left:248px;width:37px;top:167px;height:20px;line-height:21px;letter-spacing:-0.8px;">6.01</div>
<div class="c cc" style="left:300px;width:131px;top:167px;height:20px;line-height:21px;">Frederick Musgrove</div>
<div class="c cc" style="left:431px;width:87px;top:167px;height:20px;line-height:21px;">Ransome</div>
<div class="c cc" style="left:518px;width:35px;top:167px;height:20px;line-height:21px;letter-spacing:-0.8px;">21</div>
<div class="c cc" style="left:553px;width:41px;top:167px;height:20px;line-height:21px;letter-spacing:-0.8px;">1822</div>
<div class="c cc" style="left:25px;width:87px;top:187px;height:21px;line-height:22px;color:#7f7f7f;font-style:italic;">Gal</div>
<div class="c cc" style="left:112px;width:95px;top:187px;height:21px;line-height:22px;color:#7f7f7f;font-style:italic;">Gadot</div>
<div class="c cc" style="left:207px;width:41px;top:187px;height:21px;line-height:22px;color:#7f7f7f;font-style:italic;letter-spacing:-0.8px;">1985</div>
<div class="c cc" style="left:248px;width:37px;top:187px;height:21px;line-height:22px;color:#7f7f7f;font-style:italic;letter-spacing:-0.8px;">5.10</div>
<div class="c cc" style="left:300px;width:131px;top:187px;height:21px;line-height:22px;color:#7f7f7f;font-style:italic;">Valeria</div>
<div class="c cc" style="left:431px;width:87px;top:187px;height:21px;line-height:22px;color:#7f7f7f;font-style:italic;">Amador</div>
<div class="c cc" style="left:518px;width:35px;top:187px;height:21px;line-height:22px;color:#7f7f7f;font-style:italic;letter-spacing:-0.8px;">22</div>
<div class="c cc" style="left:553px;width:41px;top:187px;height:21px;line-height:22px;color:#7f7f7f;font-style:italic;letter-spacing:-0.8px;">1821</div>
<div class="c" style="left:597px;top:187px;height:21px;line-height:22px;color:#7f7f7f;font-style:italic;">Vigilante</div>
<div class="c cc" style="left:25px;width:87px;top:208px;height:20px;line-height:21px;">Bonnie</div>
<div class="c cc" style="left:112px;width:95px;top:208px;height:20px;line-height:21px;">Wright</div>
<div class="c cc" style="left:207px;width:41px;top:208px;height:20px;line-height:21px;letter-spacing:-0.8px;">1991</div>
<div class="c cc" style="left:248px;width:37px;top:208px;height:20px;line-height:21px;letter-spacing:-0.8px;">5.06</div>
<div class="c cc" style="left:300px;width:131px;top:208px;height:20px;line-height:21px;">Margaret Jane</div>
<div class="c cc" style="left:431px;width:87px;top:208px;height:20px;line-height:21px;">Ransome</div>
<div class="c cc" style="left:518px;width:35px;top:208px;height:20px;line-height:21px;letter-spacing:-0.8px;">18</div>
<div class="c cc" style="left:553px;width:41px;top:208px;height:20px;line-height:21px;letter-spacing:-0.8px;">1825</div>
<div class="c cc" style="left:25px;width:87px;top:228px;height:21px;line-height:22px;color:#7f7f7f;font-style:italic;">Sam</div>
<div class="c cc" style="left:112px;width:95px;top:228px;height:21px;line-height:22px;color:#7f7f7f;font-style:italic;">Heughan</div>
<div class="c cc" style="left:207px;width:41px;top:228px;height:21px;line-height:22px;color:#7f7f7f;font-style:italic;letter-spacing:-0.8px;">1980</div>
<div class="c cc" style="left:248px;width:37px;top:228px;height:21px;line-height:22px;color:#7f7f7f;font-style:italic;letter-spacing:-0.8px;">6.02</div>
<div class="c cc" style="left:300px;width:131px;top:228px;height:21px;line-height:22px;color:#7f7f7f;font-style:italic;">Richard Grayson</div>
<div class="c cc" style="left:431px;width:87px;top:228px;height:21px;line-height:22px;color:#7f7f7f;font-style:italic;">Pembroke</div>
<div class="c cc" style="left:518px;width:35px;top:228px;height:21px;line-height:22px;color:#7f7f7f;font-style:italic;letter-spacing:-0.8px;">24</div>
<div class="c cc" style="left:553px;width:41px;top:228px;height:21px;line-height:22px;color:#7f7f7f;font-style:italic;letter-spacing:-0.8px;">1819</div>
<div class="c" style="left:597px;top:228px;height:21px;line-height:22px;color:#7f7f7f;font-style:italic;">Barrister, heir to the Pembroke</div>
<div class="c" style="left:28px;top:284px;height:20px;line-height:21px;">David</div>
<div class="c" style="left:115px;top:284px;height:20px;line-height:21px;">Wenham</div>
<div class="c cc" style="left:207px;width:41px;top:284px;height:20px;line-height:21px;letter-spacing:-0.8px;">1965</div>
<div class="c cc" style="left:248px;width:37px;top:284px;height:20px;line-height:21px;letter-spacing:-0.8px;">6.01</div>
<div class="c" style="left:303px;top:284px;height:20px;line-height:21px;">Collin</div>
<div class="c" style="left:434px;top:284px;height:20px;line-height:21px;">Yates</div>
<div class="c cc" style="left:518px;width:35px;top:284px;height:20px;line-height:21px;letter-spacing:-0.8px;">63</div>
<div class="c cc" style="left:553px;width:41px;top:284px;height:20px;line-height:21px;letter-spacing:-0.8px;">1780</div>
<div class="c" style="left:597px;top:284px;height:20px;line-height:21px;">Lord Childers (Earl)</div>
<div class="c" style="left:28px;top:304px;height:20px;line-height:21px;">Miranda</div>
<div class="c" style="left:115px;top:304px;height:20px;line-height:21px;">Otto</div>
<div class="c cc" style="left:207px;width:41px;top:304px;height:20px;line-height:21px;letter-spacing:-0.8px;">1967</div>
<div class="c cc" style="left:248px;width:37px;top:304px;height:20px;line-height:21px;letter-spacing:-0.8px;">5.04</div>
<div class="c" style="left:303px;top:304px;height:20px;line-height:21px;">Susan</div>
<div class="c" style="left:434px;top:304px;height:20px;line-height:21px;">Yates</div>
<div class="c cc" style="left:518px;width:35px;top:304px;height:20px;line-height:21px;letter-spacing:-0.8px;">56</div>
<div class="c cc" style="left:553px;width:41px;top:304px;height:20px;line-height:21px;letter-spacing:-0.8px;">1787</div>
<div class="c" style="left:597px;top:304px;height:20px;line-height:21px;">Countess</div>
<div class="c cc" style="left:25px;width:87px;top:324px;height:20px;line-height:21px;">Arthur</div>
<div class="c cc" style="left:112px;width:95px;top:324px;height:20px;line-height:21px;">Darvill</div>
<div class="c cc" style="left:207px;width:41px;top:324px;height:20px;line-height:21px;letter-spacing:-0.8px;">1982</div>
<div class="c cc" style="left:248px;width:37px;top:324px;height:20px;line-height:21px;letter-spacing:-0.8px;">5.11</div>
<div class="c cc" style="left:300px;width:131px;top:324px;height:20px;line-height:21px;">James Barstow</div>
<div class="c cc" style="left:431px;width:87px;top:324px;height:20px;line-height:21px;">Yates</div>
<div class="c cc" style="left:518px;width:35px;top:324px;height:20px;line-height:21px;letter-spacing:-0.8px;">28</div>
<div class="c cc" style="left:553px;width:41px;top:324px;height:20px;line-height:21px;letter-spacing:-0.8px;">1815</div>
<div class="c" style="left:597px;top:324px;height:20px;line-height:21px;">Heir to an Earldom</div>
<div class="c cc" style="left:25px;width:87px;top:344px;height:21px;line-height:22px;">Karen</div>
<div class="c cc" style="left:112px;width:95px;top:344px;height:21px;line-height:22px;">Gillan</div>
<div class="c cc" style="left:207px;width:41px;top:344px;height:21px;line-height:22px;letter-spacing:-0.8px;">1987</div>
<div class="c cc" style="left:248px;width:37px;top:344px;height:21px;line-height:22px;letter-spacing:-0.8px;">5.10</div>
<div class="c cc" style="left:300px;width:131px;top:344px;height:21px;line-height:22px;">Eleanor Charlotte</div>
<div class="c cc" style="left:431px;width:87px;top:344px;height:21px;line-height:22px;">Ransome</div>
<div class="c cc" style="left:518px;width:35px;top:344px;height:21px;line-height:22px;letter-spacing:-0.8px;">23</div>
<div class="c cc" style="left:553px;width:41px;top:344px;height:21px;line-height:22px;letter-spacing:-0.8px;">1820</div>
<div class="c cc" style="left:25px;width:87px;top:365px;height:20px;line-height:21px;">Sophie</div>
<div class="c cc" style="left:112px;width:95px;top:365px;height:20px;line-height:21px;">Turner</div>
<div class="c cc" style="left:207px;width:41px;top:365px;height:20px;line-height:21px;letter-spacing:-0.8px;">1996</div>
<div class="c cc" style="left:248px;width:37px;top:365px;height:20px;line-height:21px;letter-spacing:-0.8px;">5.09</div>
<div class="c cc" style="left:300px;width:131px;top:365px;height:20px;line-height:21px;">Marianne Elizabeth</div>
<div class="c cc" style="left:431px;width:87px;top:365px;height:20px;line-height:21px;">Yates</div>
<div class="c cc" style="left:518px;width:35px;top:365px;height:20px;line-height:21px;letter-spacing:-0.8px;">18</div>
<div class="c cc" style="left:553px;width:41px;top:365px;height:20px;line-height:21px;letter-spacing:-0.8px;">1825</div>
<div class="c" style="left:597px;top:365px;height:20px;line-height:21px;">"Lady Marianne"</div>
<div class="c cc" style="left:25px;width:87px;top:385px;height:21px;line-height:22px;color:#7f7f7f;font-style:italic;">Michiel</div>
<div class="c cc" style="left:112px;width:95px;top:385px;height:21px;line-height:22px;color:#7f7f7f;font-style:italic;">Huisman</div>
<div class="c cc" style="left:207px;width:41px;top:385px;height:21px;line-height:22px;color:#7f7f7f;font-style:italic;letter-spacing:-0.8px;">1981</div>
<div class="c cc" style="left:248px;width:37px;top:385px;height:21px;line-height:22px;color:#7f7f7f;font-style:italic;letter-spacing:-0.8px;">6.00</div>
<div class="c cc" style="left:300px;width:131px;top:385px;height:21px;line-height:22px;color:#7f7f7f;font-style:italic;">Michael Edward</div>
<div class="c cc" style="left:431px;width:87px;top:385px;height:21px;line-height:22px;color:#7f7f7f;font-style:italic;">Witherington</div>
<div class="c cc" style="left:518px;width:35px;top:385px;height:21px;line-height:22px;color:#7f7f7f;font-style:italic;letter-spacing:-0.8px;">26</div>
<div class="c cc" style="left:553px;width:41px;top:385px;height:21px;line-height:22px;color:#7f7f7f;font-style:italic;letter-spacing:-0.8px;">1817</div>
<div class="c" style="left:597px;top:385px;height:21px;line-height:22px;color:#7f7f7f;font-style:italic;">Heir to a Shipping Empire</div>
<div class="c" style="left:28px;top:441px;height:20px;line-height:21px;">Ewan</div>
<div class="c" style="left:115px;top:441px;height:20px;line-height:21px;">McGregor</div>
<div class="c cc" style="left:207px;width:41px;top:441px;height:20px;line-height:21px;letter-spacing:-0.8px;">1971</div>
<div class="c cc" style="left:248px;width:37px;top:441px;height:20px;line-height:21px;letter-spacing:-0.8px;">5.10</div>
<div class="c" style="left:303px;top:441px;height:20px;line-height:21px;">Edmund "Ned"</div>
<div class="c" style="left:434px;top:441px;height:20px;line-height:21px;">Cochrane</div>
<div class="c cc" style="left:518px;width:35px;top:441px;height:20px;line-height:21px;letter-spacing:-0.8px;">60</div>
<div class="c cc" style="left:553px;width:41px;top:441px;height:20px;line-height:21px;letter-spacing:-0.8px;">1783</div>
<div class="c" style="left:597px;top:441px;height:20px;line-height:21px;">Admiral</div>
<div class="c" style="left:28px;top:461px;height:20px;line-height:21px;">Natalie</div>
<div class="c" style="left:115px;top:461px;height:20px;line-height:21px;">Portman</div>
<div class="c cc" style="left:207px;width:41px;top:461px;height:20px;line-height:21px;letter-spacing:-0.8px;">1981</div>
<div class="c cc" style="left:248px;width:37px;top:461px;height:20px;line-height:21px;letter-spacing:-0.8px;">5.03</div>
<div class="c" style="left:303px;top:461px;height:20px;line-height:21px;">Charlotte</div>
<div class="c" style="left:434px;top:461px;height:20px;line-height:21px;">Ransome</div>
<div class="c cc" style="left:518px;width:35px;top:461px;height:20px;line-height:21px;letter-spacing:-0.8px;">46</div>
<div class="c cc" style="left:553px;width:41px;top:461px;height:20px;line-height:21px;letter-spacing:-0.8px;">1797</div>
<div class="c" style="left:28px;top:481px;height:21px;line-height:22px;">Chris</div>
<div class="c" style="left:115px;top:481px;height:21px;line-height:22px;">Hemsworth</div>
<div class="c cc" style="left:207px;width:41px;top:481px;height:21px;line-height:22px;letter-spacing:-0.8px;">1983</div>
<div class="c cc" style="left:248px;width:37px;top:481px;height:21px;line-height:22px;letter-spacing:-0.8px;">6.03</div>
<div class="c cc" style="left:300px;width:131px;top:481px;height:21px;line-height:22px;">Charles Lott</div>
<div class="c cc" style="left:431px;width:87px;top:481px;height:21px;line-height:22px;">Cochrane</div>
<div class="c cc" style="left:518px;width:35px;top:481px;height:21px;line-height:22px;letter-spacing:-0.8px;">28</div>
<div class="c cc" style="left:553px;width:41px;top:481px;height:21px;line-height:22px;letter-spacing:-0.8px;">1815</div>
<div class="c cc" style="left:25px;width:87px;top:502px;height:20px;line-height:21px;color:#7f7f7f;font-style:italic;">Elsa</div>
<div class="c cc" style="left:112px;width:95px;top:502px;height:20px;line-height:21px;color:#7f7f7f;font-style:italic;">Pataky</div>
<div class="c cc" style="left:300px;width:131px;top:502px;height:20px;line-height:21px;color:#7f7f7f;font-style:italic;">Olivia</div>
<div class="c cc" style="left:431px;width:87px;top:502px;height:20px;line-height:21px;color:#7f7f7f;font-style:italic;">Ahearn</div>
<div class="c" style="left:28px;top:522px;height:20px;line-height:21px;">Katie</div>
<div class="c" style="left:115px;top:522px;height:20px;line-height:21px;">McGrath</div>
<div class="c cc" style="left:207px;width:41px;top:522px;height:20px;line-height:21px;letter-spacing:-0.8px;">1983</div>
<div class="c cc" style="left:248px;width:37px;top:522px;height:20px;line-height:21px;letter-spacing:-0.8px;">5.05</div>
<div class="c cc" style="left:300px;width:131px;top:522px;height:20px;line-height:21px;">Deborah Jane</div>
<div class="c cc" style="left:431px;width:87px;top:522px;height:20px;line-height:21px;">Cochrane</div>
<div class="c cc" style="left:518px;width:35px;top:522px;height:20px;line-height:21px;letter-spacing:-0.8px;">26</div>
<div class="c cc" style="left:553px;width:41px;top:522px;height:20px;line-height:21px;letter-spacing:-0.8px;">1817</div>
<div class="c cc" style="left:518px;width:35px;top:542px;height:21px;line-height:22px;letter-spacing:-0.8px;">1843</div>
<div class="c" style="left:28px;top:563px;height:20px;line-height:21px;">Michelle</div>
<div class="c" style="left:115px;top:563px;height:20px;line-height:21px;">Ryan</div>
<div class="c cc" style="left:207px;width:41px;top:563px;height:20px;line-height:21px;letter-spacing:-0.8px;">1984</div>
<div class="c cc" style="left:248px;width:37px;top:563px;height:20px;line-height:21px;letter-spacing:-0.8px;">5.07</div>
<div class="c cc" style="left:300px;width:131px;top:563px;height:20px;line-height:21px;">Emma Madeleine</div>
<div class="c cc" style="left:431px;width:87px;top:563px;height:20px;line-height:21px;">Cochrane</div>
<div class="c cc" style="left:518px;width:35px;top:563px;height:20px;line-height:21px;letter-spacing:-0.8px;">25</div>
<div class="c cc" style="left:553px;width:41px;top:563px;height:20px;line-height:21px;letter-spacing:-0.8px;">1818</div>
<div class="c cc" style="left:518px;width:35px;top:583px;height:21px;line-height:22px;letter-spacing:-0.8px;">1843</div>
<div class="c" style="left:28px;top:604px;height:21px;line-height:22px;">Jessica</div>
<div class="c" style="left:115px;top:604px;height:21px;line-height:22px;">de Gouw</div>
<div class="c cc" style="left:207px;width:41px;top:604px;height:21px;line-height:22px;letter-spacing:-0.8px;">1988</div>
<div class="c cc" style="left:248px;width:37px;top:604px;height:21px;line-height:22px;letter-spacing:-0.8px;">5.08</div>
<div style="position:absolute;overflow:hidden;left:286px;width:145px;top:604px;height:21px"><div class="c" style="left:12px;top:0;height:21px;line-height:22px;">Catherine "Kitty" Julia</div></div>
<div class="c cc" style="left:431px;width:87px;top:604px;height:21px;line-height:22px;">Cochrane</div>
<div class="c cc" style="left:518px;width:35px;top:604px;height:21px;line-height:22px;letter-spacing:-0.8px;">23</div>
<div class="c cc" style="left:553px;width:41px;top:604px;height:21px;line-height:22px;letter-spacing:-0.8px;">1820</div>
</div>
<div class="ab" style="left:718px;top:826px;width:732px;height:6px;background:#e6e6e6;border-top:1px solid #c8c8c8"></div>
<div class="ab" style="left:820px;top:826px;width:78px;height:6px;background:#fff;border-left:1px solid #c8c8c8;border-right:1px solid #c8c8c8"></div>
</div>
<div style="position:absolute;left:0;top:0;width:1px;height:832px;background:#8c8c8c"></div>
<div style="position:absolute;left:0;top:0;width:732px;height:1px;background:#8c8c8c"></div>
</div>
</body></html>
